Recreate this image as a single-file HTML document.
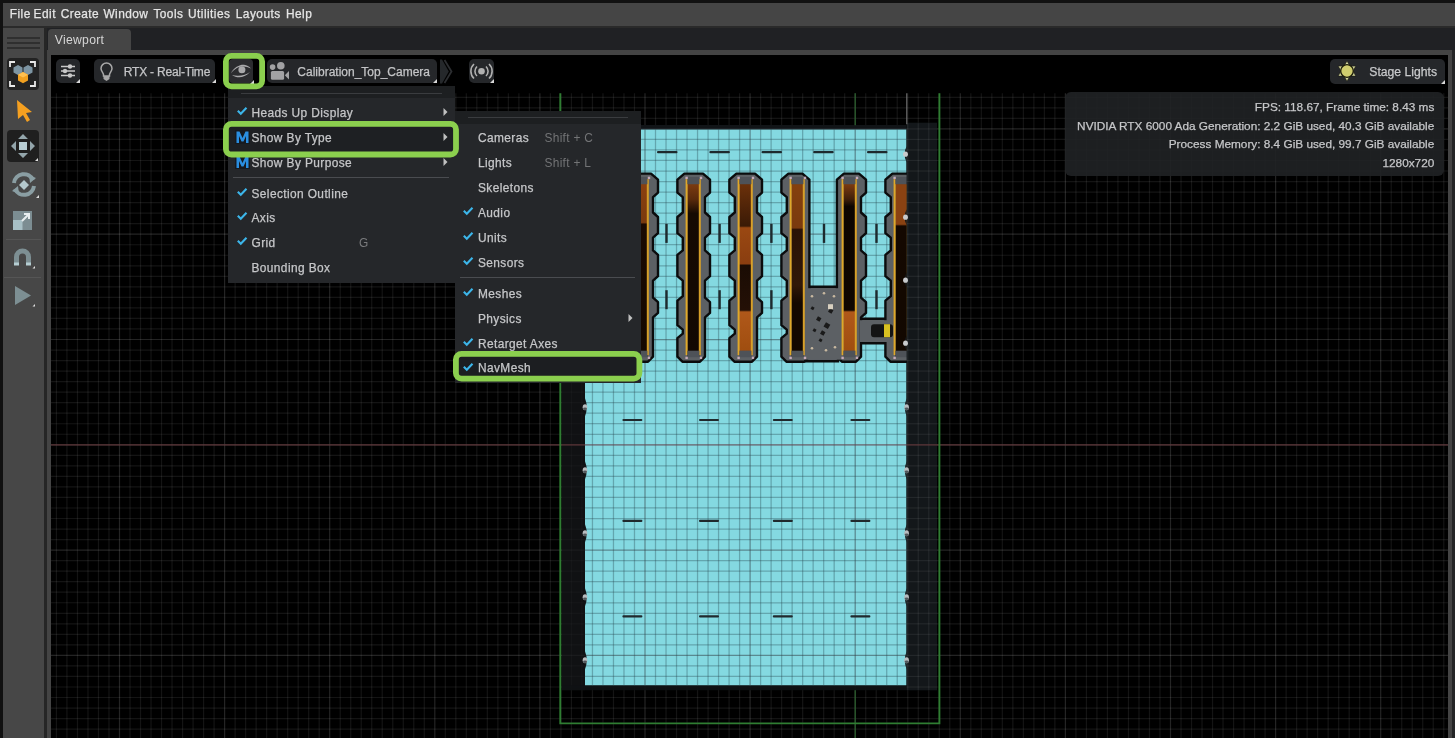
<!DOCTYPE html>
<html><head><meta charset="utf-8"><style>
html,body{margin:0;padding:0;}
body{width:1455px;height:738px;overflow:hidden;position:relative;font-family:"Liberation Sans", sans-serif;background:#111;-webkit-font-smoothing:antialiased;}
div{will-change:transform;}
</style></head><body>
<div style="position:absolute;left:0px;top:0px;width:1455px;height:738px;background:#111111;"></div><div style="position:absolute;left:3px;top:3px;width:1452px;height:23px;background:#454545;"></div><div style="position:absolute;left:3px;top:26px;width:1452px;height:1.5px;background:#2a2a2a;"></div><div style="position:absolute;left:3px;top:27.5px;width:41px;height:711px;background:#474747;"></div><div style="position:absolute;left:44px;top:27.5px;width:3px;height:711px;background:#262626;"></div><div style="position:absolute;left:47px;top:27.5px;width:1408px;height:23px;background:#202124;"></div><div style="position:absolute;left:48px;top:29px;width:83px;height:21.5px;background:#454545;border-radius:4px 4px 0 0"></div><div style="position:absolute;left:47px;top:50px;width:1405.5px;height:4.8px;background:#444444;"></div><div style="position:absolute;left:47px;top:50px;width:4px;height:688px;background:#444444;"></div><div style="position:absolute;left:1448.3px;top:50px;width:4px;height:688px;background:#444444;"></div><div style="position:absolute;left:1452.3px;top:50px;width:2.7px;height:688px;background:#242526;"></div><svg style="position:absolute;left:0;top:0;overflow:visible;will-change:transform" width="1" height="1"><text x="9.8" y="18.05" font-size="11.9" fill="#e6e6e6" stroke="#e6e6e6" stroke-width="0.25" font-weight="normal" letter-spacing="0.45" style="white-space:pre">File</text></svg><svg style="position:absolute;left:0;top:0;overflow:visible;will-change:transform" width="1" height="1"><text x="33.6" y="18.05" font-size="11.9" fill="#e6e6e6" stroke="#e6e6e6" stroke-width="0.25" font-weight="normal" letter-spacing="0.45" style="white-space:pre">Edit</text></svg><svg style="position:absolute;left:0;top:0;overflow:visible;will-change:transform" width="1" height="1"><text x="60.8" y="18.05" font-size="11.9" fill="#e6e6e6" stroke="#e6e6e6" stroke-width="0.25" font-weight="normal" letter-spacing="0.45" style="white-space:pre">Create</text></svg><svg style="position:absolute;left:0;top:0;overflow:visible;will-change:transform" width="1" height="1"><text x="103.4" y="18.05" font-size="11.9" fill="#e6e6e6" stroke="#e6e6e6" stroke-width="0.25" font-weight="normal" letter-spacing="0.45" style="white-space:pre">Window</text></svg><svg style="position:absolute;left:0;top:0;overflow:visible;will-change:transform" width="1" height="1"><text x="153.4" y="18.05" font-size="11.9" fill="#e6e6e6" stroke="#e6e6e6" stroke-width="0.25" font-weight="normal" letter-spacing="0.45" style="white-space:pre">Tools</text></svg><svg style="position:absolute;left:0;top:0;overflow:visible;will-change:transform" width="1" height="1"><text x="188.0" y="18.05" font-size="11.9" fill="#e6e6e6" stroke="#e6e6e6" stroke-width="0.25" font-weight="normal" letter-spacing="0.45" style="white-space:pre">Utilities</text></svg><svg style="position:absolute;left:0;top:0;overflow:visible;will-change:transform" width="1" height="1"><text x="235.8" y="18.05" font-size="11.9" fill="#e6e6e6" stroke="#e6e6e6" stroke-width="0.25" font-weight="normal" letter-spacing="0.45" style="white-space:pre">Layouts</text></svg><svg style="position:absolute;left:0;top:0;overflow:visible;will-change:transform" width="1" height="1"><text x="286.0" y="18.05" font-size="11.9" fill="#e6e6e6" stroke="#e6e6e6" stroke-width="0.25" font-weight="normal" letter-spacing="0.45" style="white-space:pre">Help</text></svg><svg style="position:absolute;left:0;top:0;overflow:visible;will-change:transform" width="1" height="1"><text x="54.7" y="44.4" font-size="12.2" fill="#d6d6d6" stroke="#d6d6d6" stroke-width="0" font-weight="normal" letter-spacing="0.3" style="white-space:pre">Viewport</text></svg><div style="position:absolute;left:6.5px;top:36.8px;width:32.5px;height:1.8px;background:#2f2f2f;"></div><div style="position:absolute;left:6.5px;top:41.7px;width:32.5px;height:1.8px;background:#2f2f2f;"></div><div style="position:absolute;left:6.5px;top:46.6px;width:32.5px;height:1.8px;background:#2f2f2f;"></div><div style="position:absolute;left:6.7px;top:57.8px;width:32px;height:31.7px;background:#232323;border-radius:4px"></div><svg style="position:absolute;left:7.2px;top:58px;overflow:visible;" width="31" height="32" viewBox="0 0 31 32">
<path d="M3 9 V4 H8 M23 4 H28 V9 M28 23 V28 H23 M8 28 H3 V23" fill="none" stroke="#e8e8e8" stroke-width="1.8"/>
<path d="M11 7 l4.5 2.5 v5 l-4.5 2.5 l-4.5 -2.5 v-5z" fill="#7d95a3"/>
<path d="M21 7 l4.5 2.5 v5 l-4.5 2.5 l-4.5 -2.5 v-5z" fill="#7d95a3"/>
<path d="M16 14 l5 2.8 v5.6 l-5 2.8 l-5 -2.8 v-5.6z" fill="#f0a020"/>
<path d="M16 14 l5 2.8 l-5 2.8 l-5 -2.8z" fill="#ffc050"/>
</svg><svg style="position:absolute;left:15px;top:99px;overflow:visible;" width="20" height="24" viewBox="0 0 20 24"><path d="M2 1 L17 13 L11 14 L15 21 L12 23 L8 16 L3 20 Z" fill="#f5a020"/></svg><div style="position:absolute;left:7px;top:130px;width:31.5px;height:32px;background:#1f1f1f;border-radius:4px"></div><svg style="position:absolute;left:7px;top:130px;overflow:visible;" width="32" height="32" viewBox="0 0 32 32">
<path d="M16 4 l5 5 h-10z M16 28 l5 -5 h-10z M4 16 l5 -5 v10z M28 16 l-5 -5 v10z" fill="#93a5ab"/>
<rect x="12" y="12" width="8" height="8" fill="#b8cdd3"/>
<path d="M31 28 v3 h-3z" fill="#e0e0e0"/>
</svg><svg style="position:absolute;left:8px;top:169px;overflow:visible;" width="32" height="30" viewBox="0 0 32 30">
<path d="M6 14 A10 10 0 0 1 25 11" fill="none" stroke="#8a9ea3" stroke-width="4"/>
<path d="M26 17 A10 10 0 0 1 7 20" fill="none" stroke="#8a9ea3" stroke-width="4"/>
<path d="M21 6 l7 3 l-6 5z M11 25 l-7 -3 l6 -5z" fill="#8a9ea3"/>
<path d="M16 11 l5 5 l-5 5 l-5 -5z" fill="#b5c8cc"/>
<path d="M31 26 v3 h-3z" fill="#e0e0e0"/>
</svg><svg style="position:absolute;left:12px;top:209.5px;overflow:visible;" width="22" height="22" viewBox="0 0 22 22">
<rect x="1" y="1" width="19" height="19" fill="#7c8d92"/>
<rect x="1" y="10" width="9.5" height="10" fill="#a8c0c6"/>
<path d="M10 11 L17 4 M12 4 h5 v5" fill="none" stroke="#e8eef0" stroke-width="2"/>
</svg><div style="position:absolute;left:6px;top:238.5px;width:35px;height:1px;background:#555555;"></div><svg style="position:absolute;left:12px;top:247px;overflow:visible;" width="24" height="22" viewBox="0 0 24 22">
<path d="M2 18 V10 A8.5 8.5 0 0 1 19 10 V18 H14 V10 A3.5 3.5 0 0 0 7 10 V18 Z" fill="#7d8f93"/>
<rect x="2" y="15.5" width="5" height="3" fill="#b5cdd2"/><rect x="14" y="15.5" width="5" height="3" fill="#b5cdd2"/>
<path d="M23 19 v2.5 h-2.5z" fill="#e0e0e0"/>
</svg><div style="position:absolute;left:3.5px;top:276.5px;width:37px;height:1px;background:#555555;"></div><svg style="position:absolute;left:13px;top:285px;overflow:visible;" width="24" height="24" viewBox="0 0 24 24">
<path d="M2 1 L18 10.5 L2 20 Z" fill="#7d8f93"/>
<path d="M22 19 v2.5 h-2.5z" fill="#e0e0e0"/>
</svg><div style="position:absolute;left:51px;top:54.8px;width:1397.3px;height:683.2px;background:#000;overflow:hidden"><svg style="position:absolute;left:0;top:0;filter:blur(0.45px)" width="1397.3" height="683.2"><line x1="5.44" y1="38.20" x2="5.44" y2="683.2" stroke="#fff" stroke-opacity="0.08" stroke-width="1.2"/><line x1="15.95" y1="38.20" x2="15.95" y2="683.2" stroke="#fff" stroke-opacity="0.08" stroke-width="1.2"/><line x1="26.46" y1="38.20" x2="26.46" y2="683.2" stroke="#fff" stroke-opacity="0.08" stroke-width="1.2"/><line x1="36.97" y1="38.20" x2="36.97" y2="683.2" stroke="#fff" stroke-opacity="0.08" stroke-width="1.2"/><line x1="47.48" y1="38.20" x2="47.48" y2="683.2" stroke="#fff" stroke-opacity="0.08" stroke-width="1.2"/><line x1="57.99" y1="38.20" x2="57.99" y2="683.2" stroke="#fff" stroke-opacity="0.08" stroke-width="1.2"/><line x1="68.50" y1="38.20" x2="68.50" y2="683.2" stroke="#fff" stroke-opacity="0.14" stroke-width="1.2"/><line x1="79.01" y1="38.20" x2="79.01" y2="683.2" stroke="#fff" stroke-opacity="0.08" stroke-width="1.2"/><line x1="89.52" y1="38.20" x2="89.52" y2="683.2" stroke="#fff" stroke-opacity="0.08" stroke-width="1.2"/><line x1="100.03" y1="38.20" x2="100.03" y2="683.2" stroke="#fff" stroke-opacity="0.08" stroke-width="1.2"/><line x1="110.54" y1="38.20" x2="110.54" y2="683.2" stroke="#fff" stroke-opacity="0.08" stroke-width="1.2"/><line x1="121.05" y1="38.20" x2="121.05" y2="683.2" stroke="#fff" stroke-opacity="0.08" stroke-width="1.2"/><line x1="131.56" y1="38.20" x2="131.56" y2="683.2" stroke="#fff" stroke-opacity="0.08" stroke-width="1.2"/><line x1="142.07" y1="38.20" x2="142.07" y2="683.2" stroke="#fff" stroke-opacity="0.08" stroke-width="1.2"/><line x1="152.58" y1="38.20" x2="152.58" y2="683.2" stroke="#fff" stroke-opacity="0.08" stroke-width="1.2"/><line x1="163.09" y1="38.20" x2="163.09" y2="683.2" stroke="#fff" stroke-opacity="0.08" stroke-width="1.2"/><line x1="173.60" y1="38.20" x2="173.60" y2="683.2" stroke="#fff" stroke-opacity="0.14" stroke-width="1.2"/><line x1="184.11" y1="38.20" x2="184.11" y2="683.2" stroke="#fff" stroke-opacity="0.08" stroke-width="1.2"/><line x1="194.62" y1="38.20" x2="194.62" y2="683.2" stroke="#fff" stroke-opacity="0.08" stroke-width="1.2"/><line x1="205.13" y1="38.20" x2="205.13" y2="683.2" stroke="#fff" stroke-opacity="0.08" stroke-width="1.2"/><line x1="215.64" y1="38.20" x2="215.64" y2="683.2" stroke="#fff" stroke-opacity="0.08" stroke-width="1.2"/><line x1="226.15" y1="38.20" x2="226.15" y2="683.2" stroke="#fff" stroke-opacity="0.08" stroke-width="1.2"/><line x1="236.66" y1="38.20" x2="236.66" y2="683.2" stroke="#fff" stroke-opacity="0.08" stroke-width="1.2"/><line x1="247.17" y1="38.20" x2="247.17" y2="683.2" stroke="#fff" stroke-opacity="0.08" stroke-width="1.2"/><line x1="257.68" y1="38.20" x2="257.68" y2="683.2" stroke="#fff" stroke-opacity="0.08" stroke-width="1.2"/><line x1="268.19" y1="38.20" x2="268.19" y2="683.2" stroke="#fff" stroke-opacity="0.08" stroke-width="1.2"/><line x1="278.70" y1="38.20" x2="278.70" y2="683.2" stroke="#fff" stroke-opacity="0.14" stroke-width="1.2"/><line x1="289.21" y1="38.20" x2="289.21" y2="683.2" stroke="#fff" stroke-opacity="0.08" stroke-width="1.2"/><line x1="299.72" y1="38.20" x2="299.72" y2="683.2" stroke="#fff" stroke-opacity="0.08" stroke-width="1.2"/><line x1="310.23" y1="38.20" x2="310.23" y2="683.2" stroke="#fff" stroke-opacity="0.08" stroke-width="1.2"/><line x1="320.74" y1="38.20" x2="320.74" y2="683.2" stroke="#fff" stroke-opacity="0.08" stroke-width="1.2"/><line x1="331.25" y1="38.20" x2="331.25" y2="683.2" stroke="#fff" stroke-opacity="0.08" stroke-width="1.2"/><line x1="341.76" y1="38.20" x2="341.76" y2="683.2" stroke="#fff" stroke-opacity="0.08" stroke-width="1.2"/><line x1="352.27" y1="38.20" x2="352.27" y2="683.2" stroke="#fff" stroke-opacity="0.08" stroke-width="1.2"/><line x1="362.78" y1="38.20" x2="362.78" y2="683.2" stroke="#fff" stroke-opacity="0.08" stroke-width="1.2"/><line x1="373.29" y1="38.20" x2="373.29" y2="683.2" stroke="#fff" stroke-opacity="0.08" stroke-width="1.2"/><line x1="383.80" y1="38.20" x2="383.80" y2="683.2" stroke="#fff" stroke-opacity="0.14" stroke-width="1.2"/><line x1="394.31" y1="38.20" x2="394.31" y2="683.2" stroke="#fff" stroke-opacity="0.08" stroke-width="1.2"/><line x1="404.82" y1="38.20" x2="404.82" y2="683.2" stroke="#fff" stroke-opacity="0.08" stroke-width="1.2"/><line x1="415.33" y1="38.20" x2="415.33" y2="683.2" stroke="#fff" stroke-opacity="0.08" stroke-width="1.2"/><line x1="425.84" y1="38.20" x2="425.84" y2="683.2" stroke="#fff" stroke-opacity="0.08" stroke-width="1.2"/><line x1="436.35" y1="38.20" x2="436.35" y2="683.2" stroke="#fff" stroke-opacity="0.08" stroke-width="1.2"/><line x1="446.86" y1="38.20" x2="446.86" y2="683.2" stroke="#fff" stroke-opacity="0.08" stroke-width="1.2"/><line x1="457.37" y1="38.20" x2="457.37" y2="683.2" stroke="#fff" stroke-opacity="0.08" stroke-width="1.2"/><line x1="467.88" y1="38.20" x2="467.88" y2="683.2" stroke="#fff" stroke-opacity="0.08" stroke-width="1.2"/><line x1="478.39" y1="38.20" x2="478.39" y2="683.2" stroke="#fff" stroke-opacity="0.08" stroke-width="1.2"/><line x1="488.90" y1="38.20" x2="488.90" y2="683.2" stroke="#fff" stroke-opacity="0.14" stroke-width="1.2"/><line x1="499.41" y1="38.20" x2="499.41" y2="683.2" stroke="#fff" stroke-opacity="0.08" stroke-width="1.2"/><line x1="509.92" y1="38.20" x2="509.92" y2="683.2" stroke="#fff" stroke-opacity="0.08" stroke-width="1.2"/><line x1="520.43" y1="38.20" x2="520.43" y2="683.2" stroke="#fff" stroke-opacity="0.08" stroke-width="1.2"/><line x1="530.94" y1="38.20" x2="530.94" y2="683.2" stroke="#fff" stroke-opacity="0.08" stroke-width="1.2"/><line x1="541.45" y1="38.20" x2="541.45" y2="683.2" stroke="#fff" stroke-opacity="0.08" stroke-width="1.2"/><line x1="551.96" y1="38.20" x2="551.96" y2="683.2" stroke="#fff" stroke-opacity="0.08" stroke-width="1.2"/><line x1="562.47" y1="38.20" x2="562.47" y2="683.2" stroke="#fff" stroke-opacity="0.08" stroke-width="1.2"/><line x1="572.98" y1="38.20" x2="572.98" y2="683.2" stroke="#fff" stroke-opacity="0.08" stroke-width="1.2"/><line x1="583.49" y1="38.20" x2="583.49" y2="683.2" stroke="#fff" stroke-opacity="0.08" stroke-width="1.2"/><line x1="594.00" y1="38.20" x2="594.00" y2="683.2" stroke="#fff" stroke-opacity="0.14" stroke-width="1.2"/><line x1="604.51" y1="38.20" x2="604.51" y2="683.2" stroke="#fff" stroke-opacity="0.08" stroke-width="1.2"/><line x1="615.02" y1="38.20" x2="615.02" y2="683.2" stroke="#fff" stroke-opacity="0.08" stroke-width="1.2"/><line x1="625.53" y1="38.20" x2="625.53" y2="683.2" stroke="#fff" stroke-opacity="0.08" stroke-width="1.2"/><line x1="636.04" y1="38.20" x2="636.04" y2="683.2" stroke="#fff" stroke-opacity="0.08" stroke-width="1.2"/><line x1="646.55" y1="38.20" x2="646.55" y2="683.2" stroke="#fff" stroke-opacity="0.08" stroke-width="1.2"/><line x1="657.06" y1="38.20" x2="657.06" y2="683.2" stroke="#fff" stroke-opacity="0.08" stroke-width="1.2"/><line x1="667.57" y1="38.20" x2="667.57" y2="683.2" stroke="#fff" stroke-opacity="0.08" stroke-width="1.2"/><line x1="678.08" y1="38.20" x2="678.08" y2="683.2" stroke="#fff" stroke-opacity="0.08" stroke-width="1.2"/><line x1="688.59" y1="38.20" x2="688.59" y2="683.2" stroke="#fff" stroke-opacity="0.08" stroke-width="1.2"/><line x1="699.10" y1="38.20" x2="699.10" y2="683.2" stroke="#fff" stroke-opacity="0.14" stroke-width="1.2"/><line x1="709.61" y1="38.20" x2="709.61" y2="683.2" stroke="#fff" stroke-opacity="0.08" stroke-width="1.2"/><line x1="720.12" y1="38.20" x2="720.12" y2="683.2" stroke="#fff" stroke-opacity="0.08" stroke-width="1.2"/><line x1="730.63" y1="38.20" x2="730.63" y2="683.2" stroke="#fff" stroke-opacity="0.08" stroke-width="1.2"/><line x1="741.14" y1="38.20" x2="741.14" y2="683.2" stroke="#fff" stroke-opacity="0.08" stroke-width="1.2"/><line x1="751.65" y1="38.20" x2="751.65" y2="683.2" stroke="#fff" stroke-opacity="0.08" stroke-width="1.2"/><line x1="762.16" y1="38.20" x2="762.16" y2="683.2" stroke="#fff" stroke-opacity="0.08" stroke-width="1.2"/><line x1="772.67" y1="38.20" x2="772.67" y2="683.2" stroke="#fff" stroke-opacity="0.08" stroke-width="1.2"/><line x1="783.18" y1="38.20" x2="783.18" y2="683.2" stroke="#fff" stroke-opacity="0.08" stroke-width="1.2"/><line x1="793.69" y1="38.20" x2="793.69" y2="683.2" stroke="#fff" stroke-opacity="0.08" stroke-width="1.2"/><line x1="804.20" y1="38.20" x2="804.20" y2="683.2" stroke="#fff" stroke-opacity="0.14" stroke-width="1.2"/><line x1="814.71" y1="38.20" x2="814.71" y2="683.2" stroke="#fff" stroke-opacity="0.08" stroke-width="1.2"/><line x1="825.22" y1="38.20" x2="825.22" y2="683.2" stroke="#fff" stroke-opacity="0.08" stroke-width="1.2"/><line x1="835.73" y1="38.20" x2="835.73" y2="683.2" stroke="#fff" stroke-opacity="0.08" stroke-width="1.2"/><line x1="846.24" y1="38.20" x2="846.24" y2="683.2" stroke="#fff" stroke-opacity="0.08" stroke-width="1.2"/><line x1="856.75" y1="38.20" x2="856.75" y2="683.2" stroke="#fff" stroke-opacity="0.08" stroke-width="1.2"/><line x1="867.26" y1="38.20" x2="867.26" y2="683.2" stroke="#fff" stroke-opacity="0.08" stroke-width="1.2"/><line x1="877.77" y1="38.20" x2="877.77" y2="683.2" stroke="#fff" stroke-opacity="0.08" stroke-width="1.2"/><line x1="888.28" y1="38.20" x2="888.28" y2="683.2" stroke="#fff" stroke-opacity="0.08" stroke-width="1.2"/><line x1="898.79" y1="38.20" x2="898.79" y2="683.2" stroke="#fff" stroke-opacity="0.08" stroke-width="1.2"/><line x1="909.30" y1="38.20" x2="909.30" y2="683.2" stroke="#fff" stroke-opacity="0.14" stroke-width="1.2"/><line x1="919.81" y1="38.20" x2="919.81" y2="683.2" stroke="#fff" stroke-opacity="0.08" stroke-width="1.2"/><line x1="930.32" y1="38.20" x2="930.32" y2="683.2" stroke="#fff" stroke-opacity="0.08" stroke-width="1.2"/><line x1="940.83" y1="38.20" x2="940.83" y2="683.2" stroke="#fff" stroke-opacity="0.08" stroke-width="1.2"/><line x1="951.34" y1="38.20" x2="951.34" y2="683.2" stroke="#fff" stroke-opacity="0.08" stroke-width="1.2"/><line x1="961.85" y1="38.20" x2="961.85" y2="683.2" stroke="#fff" stroke-opacity="0.08" stroke-width="1.2"/><line x1="972.36" y1="38.20" x2="972.36" y2="683.2" stroke="#fff" stroke-opacity="0.08" stroke-width="1.2"/><line x1="982.87" y1="38.20" x2="982.87" y2="683.2" stroke="#fff" stroke-opacity="0.08" stroke-width="1.2"/><line x1="993.38" y1="38.20" x2="993.38" y2="683.2" stroke="#fff" stroke-opacity="0.08" stroke-width="1.2"/><line x1="1003.89" y1="38.20" x2="1003.89" y2="683.2" stroke="#fff" stroke-opacity="0.08" stroke-width="1.2"/><line x1="1014.40" y1="38.20" x2="1014.40" y2="683.2" stroke="#fff" stroke-opacity="0.14" stroke-width="1.2"/><line x1="1024.91" y1="38.20" x2="1024.91" y2="683.2" stroke="#fff" stroke-opacity="0.08" stroke-width="1.2"/><line x1="1035.42" y1="38.20" x2="1035.42" y2="683.2" stroke="#fff" stroke-opacity="0.08" stroke-width="1.2"/><line x1="1045.93" y1="38.20" x2="1045.93" y2="683.2" stroke="#fff" stroke-opacity="0.08" stroke-width="1.2"/><line x1="1056.44" y1="38.20" x2="1056.44" y2="683.2" stroke="#fff" stroke-opacity="0.08" stroke-width="1.2"/><line x1="1066.95" y1="38.20" x2="1066.95" y2="683.2" stroke="#fff" stroke-opacity="0.08" stroke-width="1.2"/><line x1="1077.46" y1="38.20" x2="1077.46" y2="683.2" stroke="#fff" stroke-opacity="0.08" stroke-width="1.2"/><line x1="1087.97" y1="38.20" x2="1087.97" y2="683.2" stroke="#fff" stroke-opacity="0.08" stroke-width="1.2"/><line x1="1098.48" y1="38.20" x2="1098.48" y2="683.2" stroke="#fff" stroke-opacity="0.08" stroke-width="1.2"/><line x1="1108.99" y1="38.20" x2="1108.99" y2="683.2" stroke="#fff" stroke-opacity="0.08" stroke-width="1.2"/><line x1="1119.50" y1="38.20" x2="1119.50" y2="683.2" stroke="#fff" stroke-opacity="0.14" stroke-width="1.2"/><line x1="1130.01" y1="38.20" x2="1130.01" y2="683.2" stroke="#fff" stroke-opacity="0.08" stroke-width="1.2"/><line x1="1140.52" y1="38.20" x2="1140.52" y2="683.2" stroke="#fff" stroke-opacity="0.08" stroke-width="1.2"/><line x1="1151.03" y1="38.20" x2="1151.03" y2="683.2" stroke="#fff" stroke-opacity="0.08" stroke-width="1.2"/><line x1="1161.54" y1="38.20" x2="1161.54" y2="683.2" stroke="#fff" stroke-opacity="0.08" stroke-width="1.2"/><line x1="1172.05" y1="38.20" x2="1172.05" y2="683.2" stroke="#fff" stroke-opacity="0.08" stroke-width="1.2"/><line x1="1182.56" y1="38.20" x2="1182.56" y2="683.2" stroke="#fff" stroke-opacity="0.08" stroke-width="1.2"/><line x1="1193.07" y1="38.20" x2="1193.07" y2="683.2" stroke="#fff" stroke-opacity="0.08" stroke-width="1.2"/><line x1="1203.58" y1="38.20" x2="1203.58" y2="683.2" stroke="#fff" stroke-opacity="0.08" stroke-width="1.2"/><line x1="1214.09" y1="38.20" x2="1214.09" y2="683.2" stroke="#fff" stroke-opacity="0.08" stroke-width="1.2"/><line x1="1224.60" y1="38.20" x2="1224.60" y2="683.2" stroke="#fff" stroke-opacity="0.14" stroke-width="1.2"/><line x1="1235.11" y1="38.20" x2="1235.11" y2="683.2" stroke="#fff" stroke-opacity="0.08" stroke-width="1.2"/><line x1="1245.62" y1="38.20" x2="1245.62" y2="683.2" stroke="#fff" stroke-opacity="0.08" stroke-width="1.2"/><line x1="1256.13" y1="38.20" x2="1256.13" y2="683.2" stroke="#fff" stroke-opacity="0.08" stroke-width="1.2"/><line x1="1266.64" y1="38.20" x2="1266.64" y2="683.2" stroke="#fff" stroke-opacity="0.08" stroke-width="1.2"/><line x1="1277.15" y1="38.20" x2="1277.15" y2="683.2" stroke="#fff" stroke-opacity="0.08" stroke-width="1.2"/><line x1="1287.66" y1="38.20" x2="1287.66" y2="683.2" stroke="#fff" stroke-opacity="0.08" stroke-width="1.2"/><line x1="1298.17" y1="38.20" x2="1298.17" y2="683.2" stroke="#fff" stroke-opacity="0.08" stroke-width="1.2"/><line x1="1308.68" y1="38.20" x2="1308.68" y2="683.2" stroke="#fff" stroke-opacity="0.08" stroke-width="1.2"/><line x1="1319.19" y1="38.20" x2="1319.19" y2="683.2" stroke="#fff" stroke-opacity="0.08" stroke-width="1.2"/><line x1="1329.70" y1="38.20" x2="1329.70" y2="683.2" stroke="#fff" stroke-opacity="0.14" stroke-width="1.2"/><line x1="1340.21" y1="38.20" x2="1340.21" y2="683.2" stroke="#fff" stroke-opacity="0.08" stroke-width="1.2"/><line x1="1350.72" y1="38.20" x2="1350.72" y2="683.2" stroke="#fff" stroke-opacity="0.08" stroke-width="1.2"/><line x1="1361.23" y1="38.20" x2="1361.23" y2="683.2" stroke="#fff" stroke-opacity="0.08" stroke-width="1.2"/><line x1="1371.74" y1="38.20" x2="1371.74" y2="683.2" stroke="#fff" stroke-opacity="0.08" stroke-width="1.2"/><line x1="1382.25" y1="38.20" x2="1382.25" y2="683.2" stroke="#fff" stroke-opacity="0.08" stroke-width="1.2"/><line x1="1392.76" y1="38.20" x2="1392.76" y2="683.2" stroke="#fff" stroke-opacity="0.08" stroke-width="1.2"/><line x1="0" y1="42.31" x2="1397.3" y2="42.31" stroke="#fff" stroke-opacity="0.08" stroke-width="1.2"/><line x1="0" y1="52.84" x2="1397.3" y2="52.84" stroke="#fff" stroke-opacity="0.08" stroke-width="1.2"/><line x1="0" y1="63.37" x2="1397.3" y2="63.37" stroke="#fff" stroke-opacity="0.08" stroke-width="1.2"/><line x1="0" y1="73.90" x2="1397.3" y2="73.90" stroke="#fff" stroke-opacity="0.14" stroke-width="1.2"/><line x1="0" y1="84.43" x2="1397.3" y2="84.43" stroke="#fff" stroke-opacity="0.08" stroke-width="1.2"/><line x1="0" y1="94.96" x2="1397.3" y2="94.96" stroke="#fff" stroke-opacity="0.08" stroke-width="1.2"/><line x1="0" y1="105.49" x2="1397.3" y2="105.49" stroke="#fff" stroke-opacity="0.08" stroke-width="1.2"/><line x1="0" y1="116.02" x2="1397.3" y2="116.02" stroke="#fff" stroke-opacity="0.08" stroke-width="1.2"/><line x1="0" y1="126.55" x2="1397.3" y2="126.55" stroke="#fff" stroke-opacity="0.08" stroke-width="1.2"/><line x1="0" y1="137.08" x2="1397.3" y2="137.08" stroke="#fff" stroke-opacity="0.08" stroke-width="1.2"/><line x1="0" y1="147.61" x2="1397.3" y2="147.61" stroke="#fff" stroke-opacity="0.08" stroke-width="1.2"/><line x1="0" y1="158.14" x2="1397.3" y2="158.14" stroke="#fff" stroke-opacity="0.08" stroke-width="1.2"/><line x1="0" y1="168.67" x2="1397.3" y2="168.67" stroke="#fff" stroke-opacity="0.08" stroke-width="1.2"/><line x1="0" y1="179.20" x2="1397.3" y2="179.20" stroke="#fff" stroke-opacity="0.14" stroke-width="1.2"/><line x1="0" y1="189.73" x2="1397.3" y2="189.73" stroke="#fff" stroke-opacity="0.08" stroke-width="1.2"/><line x1="0" y1="200.26" x2="1397.3" y2="200.26" stroke="#fff" stroke-opacity="0.08" stroke-width="1.2"/><line x1="0" y1="210.79" x2="1397.3" y2="210.79" stroke="#fff" stroke-opacity="0.08" stroke-width="1.2"/><line x1="0" y1="221.32" x2="1397.3" y2="221.32" stroke="#fff" stroke-opacity="0.08" stroke-width="1.2"/><line x1="0" y1="231.85" x2="1397.3" y2="231.85" stroke="#fff" stroke-opacity="0.08" stroke-width="1.2"/><line x1="0" y1="242.38" x2="1397.3" y2="242.38" stroke="#fff" stroke-opacity="0.08" stroke-width="1.2"/><line x1="0" y1="252.91" x2="1397.3" y2="252.91" stroke="#fff" stroke-opacity="0.08" stroke-width="1.2"/><line x1="0" y1="263.44" x2="1397.3" y2="263.44" stroke="#fff" stroke-opacity="0.08" stroke-width="1.2"/><line x1="0" y1="273.97" x2="1397.3" y2="273.97" stroke="#fff" stroke-opacity="0.08" stroke-width="1.2"/><line x1="0" y1="284.50" x2="1397.3" y2="284.50" stroke="#fff" stroke-opacity="0.14" stroke-width="1.2"/><line x1="0" y1="295.03" x2="1397.3" y2="295.03" stroke="#fff" stroke-opacity="0.08" stroke-width="1.2"/><line x1="0" y1="305.56" x2="1397.3" y2="305.56" stroke="#fff" stroke-opacity="0.08" stroke-width="1.2"/><line x1="0" y1="316.09" x2="1397.3" y2="316.09" stroke="#fff" stroke-opacity="0.08" stroke-width="1.2"/><line x1="0" y1="326.62" x2="1397.3" y2="326.62" stroke="#fff" stroke-opacity="0.08" stroke-width="1.2"/><line x1="0" y1="337.15" x2="1397.3" y2="337.15" stroke="#fff" stroke-opacity="0.08" stroke-width="1.2"/><line x1="0" y1="347.68" x2="1397.3" y2="347.68" stroke="#fff" stroke-opacity="0.08" stroke-width="1.2"/><line x1="0" y1="358.21" x2="1397.3" y2="358.21" stroke="#fff" stroke-opacity="0.08" stroke-width="1.2"/><line x1="0" y1="368.74" x2="1397.3" y2="368.74" stroke="#fff" stroke-opacity="0.08" stroke-width="1.2"/><line x1="0" y1="379.27" x2="1397.3" y2="379.27" stroke="#fff" stroke-opacity="0.08" stroke-width="1.2"/><line x1="0" y1="389.80" x2="1397.3" y2="389.80" stroke="#fff" stroke-opacity="0.14" stroke-width="1.2"/><line x1="0" y1="400.33" x2="1397.3" y2="400.33" stroke="#fff" stroke-opacity="0.08" stroke-width="1.2"/><line x1="0" y1="410.86" x2="1397.3" y2="410.86" stroke="#fff" stroke-opacity="0.08" stroke-width="1.2"/><line x1="0" y1="421.39" x2="1397.3" y2="421.39" stroke="#fff" stroke-opacity="0.08" stroke-width="1.2"/><line x1="0" y1="431.92" x2="1397.3" y2="431.92" stroke="#fff" stroke-opacity="0.08" stroke-width="1.2"/><line x1="0" y1="442.45" x2="1397.3" y2="442.45" stroke="#fff" stroke-opacity="0.08" stroke-width="1.2"/><line x1="0" y1="452.98" x2="1397.3" y2="452.98" stroke="#fff" stroke-opacity="0.08" stroke-width="1.2"/><line x1="0" y1="463.51" x2="1397.3" y2="463.51" stroke="#fff" stroke-opacity="0.08" stroke-width="1.2"/><line x1="0" y1="474.04" x2="1397.3" y2="474.04" stroke="#fff" stroke-opacity="0.08" stroke-width="1.2"/><line x1="0" y1="484.57" x2="1397.3" y2="484.57" stroke="#fff" stroke-opacity="0.08" stroke-width="1.2"/><line x1="0" y1="495.10" x2="1397.3" y2="495.10" stroke="#fff" stroke-opacity="0.14" stroke-width="1.2"/><line x1="0" y1="505.63" x2="1397.3" y2="505.63" stroke="#fff" stroke-opacity="0.08" stroke-width="1.2"/><line x1="0" y1="516.16" x2="1397.3" y2="516.16" stroke="#fff" stroke-opacity="0.08" stroke-width="1.2"/><line x1="0" y1="526.69" x2="1397.3" y2="526.69" stroke="#fff" stroke-opacity="0.08" stroke-width="1.2"/><line x1="0" y1="537.22" x2="1397.3" y2="537.22" stroke="#fff" stroke-opacity="0.08" stroke-width="1.2"/><line x1="0" y1="547.75" x2="1397.3" y2="547.75" stroke="#fff" stroke-opacity="0.08" stroke-width="1.2"/><line x1="0" y1="558.28" x2="1397.3" y2="558.28" stroke="#fff" stroke-opacity="0.08" stroke-width="1.2"/><line x1="0" y1="568.81" x2="1397.3" y2="568.81" stroke="#fff" stroke-opacity="0.08" stroke-width="1.2"/><line x1="0" y1="579.34" x2="1397.3" y2="579.34" stroke="#fff" stroke-opacity="0.08" stroke-width="1.2"/><line x1="0" y1="589.87" x2="1397.3" y2="589.87" stroke="#fff" stroke-opacity="0.08" stroke-width="1.2"/><line x1="0" y1="600.40" x2="1397.3" y2="600.40" stroke="#fff" stroke-opacity="0.14" stroke-width="1.2"/><line x1="0" y1="610.93" x2="1397.3" y2="610.93" stroke="#fff" stroke-opacity="0.08" stroke-width="1.2"/><line x1="0" y1="621.46" x2="1397.3" y2="621.46" stroke="#fff" stroke-opacity="0.08" stroke-width="1.2"/><line x1="0" y1="631.99" x2="1397.3" y2="631.99" stroke="#fff" stroke-opacity="0.08" stroke-width="1.2"/><line x1="0" y1="642.52" x2="1397.3" y2="642.52" stroke="#fff" stroke-opacity="0.08" stroke-width="1.2"/><line x1="0" y1="653.05" x2="1397.3" y2="653.05" stroke="#fff" stroke-opacity="0.08" stroke-width="1.2"/><line x1="0" y1="663.58" x2="1397.3" y2="663.58" stroke="#fff" stroke-opacity="0.08" stroke-width="1.2"/><line x1="0" y1="674.11" x2="1397.3" y2="674.11" stroke="#fff" stroke-opacity="0.08" stroke-width="1.2"/></svg><svg style="position:absolute;left:0;top:0" width="1397.3" height="683.2"><rect x="511" y="73.2" width="23" height="562" fill="#16181b" opacity="0.72"/><rect x="511" y="630.2" width="375" height="5" fill="#101214" opacity="0.9"/><path d="M534.00,74.20 L855.50,74.20 L855.50,630.20 L534.00,630.20 Z" fill="#84d9e1"/><rect x="534" y="70.0" width="321.6" height="4.2" fill="#111417"/><line x1="541.45" y1="74.2" x2="541.45" y2="630.2" stroke="#22434b" stroke-opacity="0.34" stroke-width="1.25"/><line x1="551.96" y1="74.2" x2="551.96" y2="630.2" stroke="#22434b" stroke-opacity="0.34" stroke-width="1.25"/><line x1="562.47" y1="74.2" x2="562.47" y2="630.2" stroke="#22434b" stroke-opacity="0.34" stroke-width="1.25"/><line x1="572.98" y1="74.2" x2="572.98" y2="630.2" stroke="#22434b" stroke-opacity="0.34" stroke-width="1.25"/><line x1="583.49" y1="74.2" x2="583.49" y2="630.2" stroke="#22434b" stroke-opacity="0.34" stroke-width="1.25"/><line x1="594.00" y1="74.2" x2="594.00" y2="630.2" stroke="#303a40" stroke-opacity="0.5" stroke-width="1.25"/><line x1="604.51" y1="74.2" x2="604.51" y2="630.2" stroke="#22434b" stroke-opacity="0.34" stroke-width="1.25"/><line x1="615.02" y1="74.2" x2="615.02" y2="630.2" stroke="#22434b" stroke-opacity="0.34" stroke-width="1.25"/><line x1="625.53" y1="74.2" x2="625.53" y2="630.2" stroke="#22434b" stroke-opacity="0.34" stroke-width="1.25"/><line x1="636.04" y1="74.2" x2="636.04" y2="630.2" stroke="#22434b" stroke-opacity="0.34" stroke-width="1.25"/><line x1="646.55" y1="74.2" x2="646.55" y2="630.2" stroke="#22434b" stroke-opacity="0.34" stroke-width="1.25"/><line x1="657.06" y1="74.2" x2="657.06" y2="630.2" stroke="#22434b" stroke-opacity="0.34" stroke-width="1.25"/><line x1="667.57" y1="74.2" x2="667.57" y2="630.2" stroke="#22434b" stroke-opacity="0.34" stroke-width="1.25"/><line x1="678.08" y1="74.2" x2="678.08" y2="630.2" stroke="#22434b" stroke-opacity="0.34" stroke-width="1.25"/><line x1="688.59" y1="74.2" x2="688.59" y2="630.2" stroke="#22434b" stroke-opacity="0.34" stroke-width="1.25"/><line x1="699.10" y1="74.2" x2="699.10" y2="630.2" stroke="#303a40" stroke-opacity="0.5" stroke-width="1.25"/><line x1="709.61" y1="74.2" x2="709.61" y2="630.2" stroke="#22434b" stroke-opacity="0.34" stroke-width="1.25"/><line x1="720.12" y1="74.2" x2="720.12" y2="630.2" stroke="#22434b" stroke-opacity="0.34" stroke-width="1.25"/><line x1="730.63" y1="74.2" x2="730.63" y2="630.2" stroke="#22434b" stroke-opacity="0.34" stroke-width="1.25"/><line x1="741.14" y1="74.2" x2="741.14" y2="630.2" stroke="#22434b" stroke-opacity="0.34" stroke-width="1.25"/><line x1="751.65" y1="74.2" x2="751.65" y2="630.2" stroke="#22434b" stroke-opacity="0.34" stroke-width="1.25"/><line x1="762.16" y1="74.2" x2="762.16" y2="630.2" stroke="#22434b" stroke-opacity="0.34" stroke-width="1.25"/><line x1="772.67" y1="74.2" x2="772.67" y2="630.2" stroke="#22434b" stroke-opacity="0.34" stroke-width="1.25"/><line x1="783.18" y1="74.2" x2="783.18" y2="630.2" stroke="#22434b" stroke-opacity="0.34" stroke-width="1.25"/><line x1="793.69" y1="74.2" x2="793.69" y2="630.2" stroke="#22434b" stroke-opacity="0.34" stroke-width="1.25"/><line x1="804.20" y1="74.2" x2="804.20" y2="630.2" stroke="#303a40" stroke-opacity="0.5" stroke-width="1.25"/><line x1="814.71" y1="74.2" x2="814.71" y2="630.2" stroke="#22434b" stroke-opacity="0.34" stroke-width="1.25"/><line x1="825.22" y1="74.2" x2="825.22" y2="630.2" stroke="#22434b" stroke-opacity="0.34" stroke-width="1.25"/><line x1="835.73" y1="74.2" x2="835.73" y2="630.2" stroke="#22434b" stroke-opacity="0.34" stroke-width="1.25"/><line x1="846.24" y1="74.2" x2="846.24" y2="630.2" stroke="#22434b" stroke-opacity="0.34" stroke-width="1.25"/><line x1="534" y1="73.90" x2="855.5" y2="73.90" stroke="#303a40" stroke-opacity="0.5" stroke-width="1.25"/><line x1="534" y1="84.43" x2="855.5" y2="84.43" stroke="#22434b" stroke-opacity="0.34" stroke-width="1.25"/><line x1="534" y1="94.96" x2="855.5" y2="94.96" stroke="#22434b" stroke-opacity="0.34" stroke-width="1.25"/><line x1="534" y1="105.49" x2="855.5" y2="105.49" stroke="#22434b" stroke-opacity="0.34" stroke-width="1.25"/><line x1="534" y1="116.02" x2="855.5" y2="116.02" stroke="#22434b" stroke-opacity="0.34" stroke-width="1.25"/><line x1="534" y1="126.55" x2="855.5" y2="126.55" stroke="#22434b" stroke-opacity="0.34" stroke-width="1.25"/><line x1="534" y1="137.08" x2="855.5" y2="137.08" stroke="#22434b" stroke-opacity="0.34" stroke-width="1.25"/><line x1="534" y1="147.61" x2="855.5" y2="147.61" stroke="#22434b" stroke-opacity="0.34" stroke-width="1.25"/><line x1="534" y1="158.14" x2="855.5" y2="158.14" stroke="#22434b" stroke-opacity="0.34" stroke-width="1.25"/><line x1="534" y1="168.67" x2="855.5" y2="168.67" stroke="#22434b" stroke-opacity="0.34" stroke-width="1.25"/><line x1="534" y1="179.20" x2="855.5" y2="179.20" stroke="#303a40" stroke-opacity="0.5" stroke-width="1.25"/><line x1="534" y1="189.73" x2="855.5" y2="189.73" stroke="#22434b" stroke-opacity="0.34" stroke-width="1.25"/><line x1="534" y1="200.26" x2="855.5" y2="200.26" stroke="#22434b" stroke-opacity="0.34" stroke-width="1.25"/><line x1="534" y1="210.79" x2="855.5" y2="210.79" stroke="#22434b" stroke-opacity="0.34" stroke-width="1.25"/><line x1="534" y1="221.32" x2="855.5" y2="221.32" stroke="#22434b" stroke-opacity="0.34" stroke-width="1.25"/><line x1="534" y1="231.85" x2="855.5" y2="231.85" stroke="#22434b" stroke-opacity="0.34" stroke-width="1.25"/><line x1="534" y1="242.38" x2="855.5" y2="242.38" stroke="#22434b" stroke-opacity="0.34" stroke-width="1.25"/><line x1="534" y1="252.91" x2="855.5" y2="252.91" stroke="#22434b" stroke-opacity="0.34" stroke-width="1.25"/><line x1="534" y1="263.44" x2="855.5" y2="263.44" stroke="#22434b" stroke-opacity="0.34" stroke-width="1.25"/><line x1="534" y1="273.97" x2="855.5" y2="273.97" stroke="#22434b" stroke-opacity="0.34" stroke-width="1.25"/><line x1="534" y1="284.50" x2="855.5" y2="284.50" stroke="#303a40" stroke-opacity="0.5" stroke-width="1.25"/><line x1="534" y1="295.03" x2="855.5" y2="295.03" stroke="#22434b" stroke-opacity="0.34" stroke-width="1.25"/><line x1="534" y1="305.56" x2="855.5" y2="305.56" stroke="#22434b" stroke-opacity="0.34" stroke-width="1.25"/><line x1="534" y1="316.09" x2="855.5" y2="316.09" stroke="#22434b" stroke-opacity="0.34" stroke-width="1.25"/><line x1="534" y1="326.62" x2="855.5" y2="326.62" stroke="#22434b" stroke-opacity="0.34" stroke-width="1.25"/><line x1="534" y1="337.15" x2="855.5" y2="337.15" stroke="#22434b" stroke-opacity="0.34" stroke-width="1.25"/><line x1="534" y1="347.68" x2="855.5" y2="347.68" stroke="#22434b" stroke-opacity="0.34" stroke-width="1.25"/><line x1="534" y1="358.21" x2="855.5" y2="358.21" stroke="#22434b" stroke-opacity="0.34" stroke-width="1.25"/><line x1="534" y1="368.74" x2="855.5" y2="368.74" stroke="#22434b" stroke-opacity="0.34" stroke-width="1.25"/><line x1="534" y1="379.27" x2="855.5" y2="379.27" stroke="#22434b" stroke-opacity="0.34" stroke-width="1.25"/><line x1="534" y1="389.80" x2="855.5" y2="389.80" stroke="#303a40" stroke-opacity="0.5" stroke-width="1.25"/><line x1="534" y1="400.33" x2="855.5" y2="400.33" stroke="#22434b" stroke-opacity="0.34" stroke-width="1.25"/><line x1="534" y1="410.86" x2="855.5" y2="410.86" stroke="#22434b" stroke-opacity="0.34" stroke-width="1.25"/><line x1="534" y1="421.39" x2="855.5" y2="421.39" stroke="#22434b" stroke-opacity="0.34" stroke-width="1.25"/><line x1="534" y1="431.92" x2="855.5" y2="431.92" stroke="#22434b" stroke-opacity="0.34" stroke-width="1.25"/><line x1="534" y1="442.45" x2="855.5" y2="442.45" stroke="#22434b" stroke-opacity="0.34" stroke-width="1.25"/><line x1="534" y1="452.98" x2="855.5" y2="452.98" stroke="#22434b" stroke-opacity="0.34" stroke-width="1.25"/><line x1="534" y1="463.51" x2="855.5" y2="463.51" stroke="#22434b" stroke-opacity="0.34" stroke-width="1.25"/><line x1="534" y1="474.04" x2="855.5" y2="474.04" stroke="#22434b" stroke-opacity="0.34" stroke-width="1.25"/><line x1="534" y1="484.57" x2="855.5" y2="484.57" stroke="#22434b" stroke-opacity="0.34" stroke-width="1.25"/><line x1="534" y1="495.10" x2="855.5" y2="495.10" stroke="#303a40" stroke-opacity="0.5" stroke-width="1.25"/><line x1="534" y1="505.63" x2="855.5" y2="505.63" stroke="#22434b" stroke-opacity="0.34" stroke-width="1.25"/><line x1="534" y1="516.16" x2="855.5" y2="516.16" stroke="#22434b" stroke-opacity="0.34" stroke-width="1.25"/><line x1="534" y1="526.69" x2="855.5" y2="526.69" stroke="#22434b" stroke-opacity="0.34" stroke-width="1.25"/><line x1="534" y1="537.22" x2="855.5" y2="537.22" stroke="#22434b" stroke-opacity="0.34" stroke-width="1.25"/><line x1="534" y1="547.75" x2="855.5" y2="547.75" stroke="#22434b" stroke-opacity="0.34" stroke-width="1.25"/><line x1="534" y1="558.28" x2="855.5" y2="558.28" stroke="#22434b" stroke-opacity="0.34" stroke-width="1.25"/><line x1="534" y1="568.81" x2="855.5" y2="568.81" stroke="#22434b" stroke-opacity="0.34" stroke-width="1.25"/><line x1="534" y1="579.34" x2="855.5" y2="579.34" stroke="#22434b" stroke-opacity="0.34" stroke-width="1.25"/><line x1="534" y1="589.87" x2="855.5" y2="589.87" stroke="#22434b" stroke-opacity="0.34" stroke-width="1.25"/><line x1="534" y1="600.40" x2="855.5" y2="600.40" stroke="#303a40" stroke-opacity="0.5" stroke-width="1.25"/><line x1="534" y1="610.93" x2="855.5" y2="610.93" stroke="#22434b" stroke-opacity="0.34" stroke-width="1.25"/><line x1="534" y1="621.46" x2="855.5" y2="621.46" stroke="#22434b" stroke-opacity="0.34" stroke-width="1.25"/><rect x="606" y="95.89999999999999" width="20.5" height="2.4" rx="1" fill="#1d2a2e"/><rect x="658.4" y="95.89999999999999" width="20.5" height="2.4" rx="1" fill="#1d2a2e"/><rect x="710.5" y="95.89999999999999" width="20.5" height="2.4" rx="1" fill="#1d2a2e"/><rect x="762.2" y="95.89999999999999" width="20.5" height="2.4" rx="1" fill="#1d2a2e"/><rect x="816" y="95.89999999999999" width="20.5" height="2.4" rx="1" fill="#1d2a2e"/><rect x="571.4" y="363.9" width="20" height="2.2" rx="1" fill="#20292d"/><rect x="648" y="363.9" width="20" height="2.2" rx="1" fill="#20292d"/><rect x="721.8" y="363.9" width="20" height="2.2" rx="1" fill="#20292d"/><rect x="799.4" y="363.9" width="20" height="2.2" rx="1" fill="#20292d"/><rect x="571.4" y="464.7" width="20" height="2.2" rx="1" fill="#20292d"/><rect x="648" y="464.7" width="20" height="2.2" rx="1" fill="#20292d"/><rect x="721.8" y="464.7" width="20" height="2.2" rx="1" fill="#20292d"/><rect x="799.4" y="464.7" width="20" height="2.2" rx="1" fill="#20292d"/><rect x="571.4" y="560.3000000000001" width="20" height="2.2" rx="1" fill="#20292d"/><rect x="648" y="560.3000000000001" width="20" height="2.2" rx="1" fill="#20292d"/><rect x="721.8" y="560.3000000000001" width="20" height="2.2" rx="1" fill="#20292d"/><rect x="799.4" y="560.3000000000001" width="20" height="2.2" rx="1" fill="#20292d"/><rect x="614.3" y="168.89999999999998" width="2.4" height="19" fill="#1d2a2e"/><rect x="614.3" y="235.2" width="2.4" height="19" fill="#1d2a2e"/><rect x="667.4" y="168.89999999999998" width="2.4" height="19" fill="#1d2a2e"/><rect x="667.4" y="235.2" width="2.4" height="19" fill="#1d2a2e"/><rect x="719.1999999999999" y="168.89999999999998" width="2.4" height="19" fill="#1d2a2e"/><rect x="719.1999999999999" y="235.2" width="2.4" height="19" fill="#1d2a2e"/><rect x="771.8" y="168.89999999999998" width="2.4" height="19" fill="#1d2a2e"/><rect x="771.8" y="235.2" width="2.4" height="19" fill="#1d2a2e"/><rect x="824.3" y="168.89999999999998" width="2.4" height="19" fill="#1d2a2e"/><rect x="824.3" y="235.2" width="2.4" height="19" fill="#1d2a2e"/><defs><linearGradient id="rk0" x1="0" y1="0" x2="0" y2="1"><stop offset="0" stop-color="#4a4a4e"/><stop offset="0.04" stop-color="#8a4010"/><stop offset="0.25" stop-color="#7a3a0e"/><stop offset="0.26" stop-color="#1a0a02"/><stop offset="1" stop-color="#140800"/></linearGradient><linearGradient id="rk1" x1="0" y1="0" x2="0" y2="1"><stop offset="0" stop-color="#4a4a4e"/><stop offset="0.04" stop-color="#7a3a10"/><stop offset="0.12" stop-color="#5a2a0c"/><stop offset="0.2" stop-color="#160a02"/><stop offset="1" stop-color="#120802"/></linearGradient><linearGradient id="rk2" x1="0" y1="0" x2="0" y2="1"><stop offset="0" stop-color="#4a4a4e"/><stop offset="0.04" stop-color="#6a300a"/><stop offset="0.27" stop-color="#3a1a06"/><stop offset="0.28" stop-color="#9a4812"/><stop offset="0.48" stop-color="#8a3e10"/><stop offset="0.49" stop-color="#1a0c04"/><stop offset="0.74" stop-color="#241006"/><stop offset="0.75" stop-color="#b0581a"/><stop offset="0.96" stop-color="#a04e10"/><stop offset="1" stop-color="#4a4a4e"/></linearGradient><linearGradient id="rk3" x1="0" y1="0" x2="0" y2="1"><stop offset="0" stop-color="#4a4a4e"/><stop offset="0.04" stop-color="#84400e"/><stop offset="0.28" stop-color="#7a3a0e"/><stop offset="0.29" stop-color="#2a1206"/><stop offset="0.6" stop-color="#301808"/><stop offset="0.7" stop-color="#140800"/><stop offset="1" stop-color="#120800"/></linearGradient><linearGradient id="rk4" x1="0" y1="0" x2="0" y2="1"><stop offset="0" stop-color="#4a4a4e"/><stop offset="0.04" stop-color="#7a3a10"/><stop offset="0.12" stop-color="#40200a"/><stop offset="0.16" stop-color="#0c0500"/><stop offset="0.74" stop-color="#100600"/><stop offset="0.75" stop-color="#b0581a"/><stop offset="0.96" stop-color="#a04e10"/><stop offset="1" stop-color="#4a4a4e"/></linearGradient><linearGradient id="rk5" x1="0" y1="0" x2="0" y2="1"><stop offset="0" stop-color="#4a4a4e"/><stop offset="0.04" stop-color="#8a4212"/><stop offset="0.26" stop-color="#8a4212"/><stop offset="0.27" stop-color="#140800"/><stop offset="1" stop-color="#120800"/></linearGradient></defs><path d="M755.00,231.70 L787.00,231.70 L787.00,306.20 L755.00,306.20 Z" fill="#5c6064" stroke="#0b0c0d" stroke-width="2.4"/><path d="M807.00,263.70 L841.00,263.70 L841.00,288.20 L807.00,288.20 Z" fill="#5c6064" stroke="#0b0c0d" stroke-width="2.4"/><path d="M581.40,118.60 L600.00,118.60 L607.00,124.60 L607.00,137.60 L602.00,142.10 L602.00,157.50 L607.00,162.00 L607.00,178.20 L602.00,182.70 L602.00,195.40 L607.00,199.90 L607.00,221.20 L602.00,225.70 L602.00,242.70 L607.00,247.20 L607.00,257.90 L602.00,262.40 L602.00,301.70 L597.00,306.70 L579.40,306.70 L574.40,301.70 L574.40,283.20 L579.80,278.70 L579.80,274.70 L574.40,270.20 L574.40,245.70 L579.80,241.20 L579.80,225.70 L574.40,221.20 L574.40,199.90 L579.80,195.40 L579.80,182.70 L574.40,178.20 L574.40,162.00 L579.80,157.50 L579.80,142.10 L574.40,137.60 L574.40,124.60 Z" fill="#5c6064" stroke="#0b0c0d" stroke-width="2.4" stroke-linejoin="round"/><path d="M633.40,118.60 L652.00,118.60 L659.00,124.60 L659.00,137.60 L654.00,142.10 L654.00,157.50 L659.00,162.00 L659.00,178.20 L654.00,182.70 L654.00,195.40 L659.00,199.90 L659.00,221.20 L654.00,225.70 L654.00,242.70 L659.00,247.20 L659.00,257.90 L654.00,262.40 L654.00,301.70 L649.00,306.70 L631.40,306.70 L626.40,301.70 L626.40,283.20 L631.80,278.70 L631.80,274.70 L626.40,270.20 L626.40,245.70 L631.80,241.20 L631.80,225.70 L626.40,221.20 L626.40,199.90 L631.80,195.40 L631.80,182.70 L626.40,178.20 L626.40,162.00 L631.80,157.50 L631.80,142.10 L626.40,137.60 L626.40,124.60 Z" fill="#5c6064" stroke="#0b0c0d" stroke-width="2.4" stroke-linejoin="round"/><path d="M685.40,118.60 L704.00,118.60 L711.00,124.60 L711.00,137.60 L706.00,142.10 L706.00,157.50 L711.00,162.00 L711.00,178.20 L706.00,182.70 L706.00,195.40 L711.00,199.90 L711.00,221.20 L706.00,225.70 L706.00,242.70 L711.00,247.20 L711.00,257.90 L706.00,262.40 L706.00,301.70 L701.00,306.70 L683.40,306.70 L678.40,301.70 L678.40,283.20 L683.80,278.70 L683.80,274.70 L678.40,270.20 L678.40,245.70 L683.80,241.20 L683.80,225.70 L678.40,221.20 L678.40,199.90 L683.80,195.40 L683.80,182.70 L678.40,178.20 L678.40,162.00 L683.80,157.50 L683.80,142.10 L678.40,137.60 L678.40,124.60 Z" fill="#5c6064" stroke="#0b0c0d" stroke-width="2.4" stroke-linejoin="round"/><path d="M737.40,118.60 L751.40,118.60 L758.40,124.60 L758.40,301.70 L753.40,306.70 L735.40,306.70 L730.40,301.70 L730.40,283.20 L735.80,278.70 L735.80,274.70 L730.40,270.20 L730.40,245.70 L735.80,241.20 L735.80,225.70 L730.40,221.20 L730.40,199.90 L735.80,195.40 L735.80,182.70 L730.40,178.20 L730.40,162.00 L735.80,157.50 L735.80,142.10 L730.40,137.60 L730.40,124.60 Z" fill="#5c6064" stroke="#0b0c0d" stroke-width="2.4" stroke-linejoin="round"/><path d="M792.90,118.60 L808.00,118.60 L815.00,124.60 L815.00,137.60 L810.00,142.10 L810.00,157.50 L815.00,162.00 L815.00,178.20 L810.00,182.70 L810.00,195.40 L815.00,199.90 L815.00,221.20 L810.00,225.70 L810.00,242.70 L815.00,247.20 L815.00,257.90 L810.00,262.40 L810.00,301.70 L805.00,306.70 L790.90,306.70 L785.90,301.70 L785.90,124.60 Z" fill="#5c6064" stroke="#0b0c0d" stroke-width="2.4" stroke-linejoin="round"/><path d="M841.40,118.60 L860.00,118.60 L867.00,124.60 L867.00,137.60 L862.00,142.10 L862.00,157.50 L867.00,162.00 L867.00,178.20 L862.00,182.70 L862.00,195.40 L867.00,199.90 L867.00,221.20 L862.00,225.70 L862.00,242.70 L867.00,247.20 L867.00,257.90 L862.00,262.40 L862.00,301.70 L857.00,306.70 L839.40,306.70 L834.40,301.70 L834.40,283.20 L839.80,278.70 L839.80,274.70 L834.40,270.20 L834.40,245.70 L839.80,241.20 L839.80,225.70 L834.40,221.20 L834.40,199.90 L839.80,195.40 L839.80,182.70 L834.40,178.20 L834.40,162.00 L839.80,157.50 L839.80,142.10 L834.40,137.60 L834.40,124.60 Z" fill="#5c6064" stroke="#0b0c0d" stroke-width="2.4" stroke-linejoin="round"/><rect x="749" y="233.2" width="43" height="71.5" fill="#5c6064"/><rect x="809" y="265.2" width="30" height="21.8" fill="#5c6064"/><rect x="584.40" y="122.7" width="12" height="179" fill="url(#rk0)"/><rect x="582.60" y="124.2" width="2" height="176" fill="#e0a828"/><rect x="595.80" y="124.2" width="2" height="176" fill="#d8a028"/><rect x="584.40" y="122.2" width="12" height="7" fill="#4e5258"/><rect x="584.40" y="295.7" width="12" height="6.5" fill="#4e5258"/><rect x="582.40" y="121.70" width="2.4" height="2.4" fill="#d8b8c8" opacity="0.85"/><rect x="596.80" y="121.70" width="2.4" height="2.4" fill="#d8b8c8" opacity="0.85"/><rect x="582.40" y="301.70" width="2.4" height="2.4" fill="#d8b8c8" opacity="0.85"/><rect x="596.80" y="301.70" width="2.4" height="2.4" fill="#d8b8c8" opacity="0.85"/><rect x="636.40" y="122.7" width="12" height="179" fill="url(#rk1)"/><rect x="634.60" y="124.2" width="2" height="176" fill="#e0a828"/><rect x="647.80" y="124.2" width="2" height="176" fill="#d8a028"/><rect x="636.40" y="122.2" width="12" height="7" fill="#4e5258"/><rect x="636.40" y="295.7" width="12" height="6.5" fill="#4e5258"/><rect x="634.40" y="121.70" width="2.4" height="2.4" fill="#d8b8c8" opacity="0.85"/><rect x="648.80" y="121.70" width="2.4" height="2.4" fill="#d8b8c8" opacity="0.85"/><rect x="634.40" y="301.70" width="2.4" height="2.4" fill="#d8b8c8" opacity="0.85"/><rect x="648.80" y="301.70" width="2.4" height="2.4" fill="#d8b8c8" opacity="0.85"/><rect x="688.40" y="122.7" width="12" height="179" fill="url(#rk2)"/><rect x="686.60" y="124.2" width="2" height="176" fill="#e0a828"/><rect x="699.80" y="124.2" width="2" height="176" fill="#d8a028"/><rect x="688.40" y="122.2" width="12" height="7" fill="#4e5258"/><rect x="688.40" y="295.7" width="12" height="6.5" fill="#4e5258"/><rect x="686.40" y="121.70" width="2.4" height="2.4" fill="#d8b8c8" opacity="0.85"/><rect x="700.80" y="121.70" width="2.4" height="2.4" fill="#d8b8c8" opacity="0.85"/><rect x="686.40" y="301.70" width="2.4" height="2.4" fill="#d8b8c8" opacity="0.85"/><rect x="700.80" y="301.70" width="2.4" height="2.4" fill="#d8b8c8" opacity="0.85"/><rect x="740.40" y="122.7" width="12" height="179" fill="url(#rk3)"/><rect x="738.60" y="124.2" width="2" height="176" fill="#e0a828"/><rect x="751.80" y="124.2" width="2" height="176" fill="#d8a028"/><rect x="740.40" y="122.2" width="12" height="7" fill="#4e5258"/><rect x="740.40" y="295.7" width="12" height="6.5" fill="#4e5258"/><rect x="738.40" y="121.70" width="2.4" height="2.4" fill="#d8b8c8" opacity="0.85"/><rect x="752.80" y="121.70" width="2.4" height="2.4" fill="#d8b8c8" opacity="0.85"/><rect x="738.40" y="301.70" width="2.4" height="2.4" fill="#d8b8c8" opacity="0.85"/><rect x="752.80" y="301.70" width="2.4" height="2.4" fill="#d8b8c8" opacity="0.85"/><rect x="792.40" y="122.7" width="12" height="179" fill="url(#rk4)"/><rect x="790.60" y="124.2" width="2" height="176" fill="#e0a828"/><rect x="803.80" y="124.2" width="2" height="176" fill="#d8a028"/><rect x="792.40" y="122.2" width="12" height="7" fill="#4e5258"/><rect x="792.40" y="295.7" width="12" height="6.5" fill="#4e5258"/><rect x="790.40" y="121.70" width="2.4" height="2.4" fill="#d8b8c8" opacity="0.85"/><rect x="804.80" y="121.70" width="2.4" height="2.4" fill="#d8b8c8" opacity="0.85"/><rect x="790.40" y="301.70" width="2.4" height="2.4" fill="#d8b8c8" opacity="0.85"/><rect x="804.80" y="301.70" width="2.4" height="2.4" fill="#d8b8c8" opacity="0.85"/><rect x="844.40" y="122.7" width="12" height="179" fill="url(#rk5)"/><rect x="842.60" y="124.2" width="2" height="176" fill="#e0a828"/><rect x="855.80" y="124.2" width="2" height="176" fill="#d8a028"/><rect x="844.40" y="122.2" width="12" height="7" fill="#4e5258"/><rect x="844.40" y="295.7" width="12" height="6.5" fill="#4e5258"/><rect x="842.40" y="121.70" width="2.4" height="2.4" fill="#d8b8c8" opacity="0.85"/><rect x="856.80" y="121.70" width="2.4" height="2.4" fill="#d8b8c8" opacity="0.85"/><rect x="842.40" y="301.70" width="2.4" height="2.4" fill="#d8b8c8" opacity="0.85"/><rect x="856.80" y="301.70" width="2.4" height="2.4" fill="#d8b8c8" opacity="0.85"/><rect x="767" y="261.2" width="4" height="4" fill="#1a1a1a" transform="rotate(30 767 261.2)"/><rect x="775" y="267.2" width="5" height="5" fill="#1a1a1a" transform="rotate(30 775 267.2)"/><rect x="771" y="275.2" width="4" height="4" fill="#1a1a1a" transform="rotate(30 771 275.2)"/><rect x="763" y="273.2" width="3" height="3" fill="#1a1a1a" transform="rotate(30 763 273.2)"/><rect x="779" y="253.2" width="4" height="4" fill="#1a1a1a" transform="rotate(30 779 253.2)"/><rect x="769" y="283.2" width="3" height="3" fill="#1a1a1a" transform="rotate(30 769 283.2)"/><rect x="761" y="251.2" width="3" height="3" fill="#1a1a1a" transform="rotate(30 761 251.2)"/><rect x="777" y="249.2" width="5" height="5" fill="#d8d0c0"/><circle cx="761" cy="241.2" r="1.3" fill="#c8b8a0"/><circle cx="773" cy="238.2" r="1.3" fill="#c8b8a0"/><circle cx="783" cy="241.2" r="1.3" fill="#c8b8a0"/><circle cx="761" cy="293.2" r="1.3" fill="#c8b8a0"/><circle cx="775" cy="295.2" r="1.3" fill="#c8b8a0"/><circle cx="784" cy="292.2" r="1.3" fill="#c8b8a0"/><rect x="820" y="269.2" width="22" height="13" rx="3" fill="#141414"/><rect x="833" y="269.2" width="6" height="13" fill="#d8c020"/><rect x="855.6" y="67.7" width="30.399999999999977" height="567.5" fill="#13171a"/><line x1="856.75" y1="68.2" x2="856.75" y2="635.2" stroke="#fff" stroke-opacity="0.07" stroke-width="1.2"/><line x1="867.26" y1="68.2" x2="867.26" y2="635.2" stroke="#fff" stroke-opacity="0.07" stroke-width="1.2"/><line x1="877.77" y1="68.2" x2="877.77" y2="635.2" stroke="#fff" stroke-opacity="0.07" stroke-width="1.2"/><line x1="855.6" y1="73.90" x2="886" y2="73.90" stroke="#fff" stroke-opacity="0.07" stroke-width="1.2"/><line x1="855.6" y1="84.43" x2="886" y2="84.43" stroke="#fff" stroke-opacity="0.07" stroke-width="1.2"/><line x1="855.6" y1="94.96" x2="886" y2="94.96" stroke="#fff" stroke-opacity="0.07" stroke-width="1.2"/><line x1="855.6" y1="105.49" x2="886" y2="105.49" stroke="#fff" stroke-opacity="0.07" stroke-width="1.2"/><line x1="855.6" y1="116.02" x2="886" y2="116.02" stroke="#fff" stroke-opacity="0.07" stroke-width="1.2"/><line x1="855.6" y1="126.55" x2="886" y2="126.55" stroke="#fff" stroke-opacity="0.07" stroke-width="1.2"/><line x1="855.6" y1="137.08" x2="886" y2="137.08" stroke="#fff" stroke-opacity="0.07" stroke-width="1.2"/><line x1="855.6" y1="147.61" x2="886" y2="147.61" stroke="#fff" stroke-opacity="0.07" stroke-width="1.2"/><line x1="855.6" y1="158.14" x2="886" y2="158.14" stroke="#fff" stroke-opacity="0.07" stroke-width="1.2"/><line x1="855.6" y1="168.67" x2="886" y2="168.67" stroke="#fff" stroke-opacity="0.07" stroke-width="1.2"/><line x1="855.6" y1="179.20" x2="886" y2="179.20" stroke="#fff" stroke-opacity="0.07" stroke-width="1.2"/><line x1="855.6" y1="189.73" x2="886" y2="189.73" stroke="#fff" stroke-opacity="0.07" stroke-width="1.2"/><line x1="855.6" y1="200.26" x2="886" y2="200.26" stroke="#fff" stroke-opacity="0.07" stroke-width="1.2"/><line x1="855.6" y1="210.79" x2="886" y2="210.79" stroke="#fff" stroke-opacity="0.07" stroke-width="1.2"/><line x1="855.6" y1="221.32" x2="886" y2="221.32" stroke="#fff" stroke-opacity="0.07" stroke-width="1.2"/><line x1="855.6" y1="231.85" x2="886" y2="231.85" stroke="#fff" stroke-opacity="0.07" stroke-width="1.2"/><line x1="855.6" y1="242.38" x2="886" y2="242.38" stroke="#fff" stroke-opacity="0.07" stroke-width="1.2"/><line x1="855.6" y1="252.91" x2="886" y2="252.91" stroke="#fff" stroke-opacity="0.07" stroke-width="1.2"/><line x1="855.6" y1="263.44" x2="886" y2="263.44" stroke="#fff" stroke-opacity="0.07" stroke-width="1.2"/><line x1="855.6" y1="273.97" x2="886" y2="273.97" stroke="#fff" stroke-opacity="0.07" stroke-width="1.2"/><line x1="855.6" y1="284.50" x2="886" y2="284.50" stroke="#fff" stroke-opacity="0.07" stroke-width="1.2"/><line x1="855.6" y1="295.03" x2="886" y2="295.03" stroke="#fff" stroke-opacity="0.07" stroke-width="1.2"/><line x1="855.6" y1="305.56" x2="886" y2="305.56" stroke="#fff" stroke-opacity="0.07" stroke-width="1.2"/><line x1="855.6" y1="316.09" x2="886" y2="316.09" stroke="#fff" stroke-opacity="0.07" stroke-width="1.2"/><line x1="855.6" y1="326.62" x2="886" y2="326.62" stroke="#fff" stroke-opacity="0.07" stroke-width="1.2"/><line x1="855.6" y1="337.15" x2="886" y2="337.15" stroke="#fff" stroke-opacity="0.07" stroke-width="1.2"/><line x1="855.6" y1="347.68" x2="886" y2="347.68" stroke="#fff" stroke-opacity="0.07" stroke-width="1.2"/><line x1="855.6" y1="358.21" x2="886" y2="358.21" stroke="#fff" stroke-opacity="0.07" stroke-width="1.2"/><line x1="855.6" y1="368.74" x2="886" y2="368.74" stroke="#fff" stroke-opacity="0.07" stroke-width="1.2"/><line x1="855.6" y1="379.27" x2="886" y2="379.27" stroke="#fff" stroke-opacity="0.07" stroke-width="1.2"/><line x1="855.6" y1="389.80" x2="886" y2="389.80" stroke="#fff" stroke-opacity="0.07" stroke-width="1.2"/><line x1="855.6" y1="400.33" x2="886" y2="400.33" stroke="#fff" stroke-opacity="0.07" stroke-width="1.2"/><line x1="855.6" y1="410.86" x2="886" y2="410.86" stroke="#fff" stroke-opacity="0.07" stroke-width="1.2"/><line x1="855.6" y1="421.39" x2="886" y2="421.39" stroke="#fff" stroke-opacity="0.07" stroke-width="1.2"/><line x1="855.6" y1="431.92" x2="886" y2="431.92" stroke="#fff" stroke-opacity="0.07" stroke-width="1.2"/><line x1="855.6" y1="442.45" x2="886" y2="442.45" stroke="#fff" stroke-opacity="0.07" stroke-width="1.2"/><line x1="855.6" y1="452.98" x2="886" y2="452.98" stroke="#fff" stroke-opacity="0.07" stroke-width="1.2"/><line x1="855.6" y1="463.51" x2="886" y2="463.51" stroke="#fff" stroke-opacity="0.07" stroke-width="1.2"/><line x1="855.6" y1="474.04" x2="886" y2="474.04" stroke="#fff" stroke-opacity="0.07" stroke-width="1.2"/><line x1="855.6" y1="484.57" x2="886" y2="484.57" stroke="#fff" stroke-opacity="0.07" stroke-width="1.2"/><line x1="855.6" y1="495.10" x2="886" y2="495.10" stroke="#fff" stroke-opacity="0.07" stroke-width="1.2"/><line x1="855.6" y1="505.63" x2="886" y2="505.63" stroke="#fff" stroke-opacity="0.07" stroke-width="1.2"/><line x1="855.6" y1="516.16" x2="886" y2="516.16" stroke="#fff" stroke-opacity="0.07" stroke-width="1.2"/><line x1="855.6" y1="526.69" x2="886" y2="526.69" stroke="#fff" stroke-opacity="0.07" stroke-width="1.2"/><line x1="855.6" y1="537.22" x2="886" y2="537.22" stroke="#fff" stroke-opacity="0.07" stroke-width="1.2"/><line x1="855.6" y1="547.75" x2="886" y2="547.75" stroke="#fff" stroke-opacity="0.07" stroke-width="1.2"/><line x1="855.6" y1="558.28" x2="886" y2="558.28" stroke="#fff" stroke-opacity="0.07" stroke-width="1.2"/><line x1="855.6" y1="568.81" x2="886" y2="568.81" stroke="#fff" stroke-opacity="0.07" stroke-width="1.2"/><line x1="855.6" y1="579.34" x2="886" y2="579.34" stroke="#fff" stroke-opacity="0.07" stroke-width="1.2"/><line x1="855.6" y1="589.87" x2="886" y2="589.87" stroke="#fff" stroke-opacity="0.07" stroke-width="1.2"/><line x1="855.6" y1="600.40" x2="886" y2="600.40" stroke="#fff" stroke-opacity="0.07" stroke-width="1.2"/><line x1="855.6" y1="610.93" x2="886" y2="610.93" stroke="#fff" stroke-opacity="0.07" stroke-width="1.2"/><line x1="855.6" y1="621.46" x2="886" y2="621.46" stroke="#fff" stroke-opacity="0.07" stroke-width="1.2"/><line x1="855.6" y1="631.99" x2="886" y2="631.99" stroke="#fff" stroke-opacity="0.07" stroke-width="1.2"/><path d="M855.60,91.20 Q851.50,99.20 855.60,107.20 Z" fill="#15181b"/><ellipse cx="854.50" cy="99.2" rx="2.4" ry="2.6" fill="#c8cacc"/><path d="M855.60,154.20 Q851.50,162.20 855.60,170.20 Z" fill="#15181b"/><ellipse cx="854.50" cy="162.2" rx="2.4" ry="2.6" fill="#c8cacc"/><path d="M855.60,217.20 Q851.50,225.20 855.60,233.20 Z" fill="#15181b"/><ellipse cx="854.50" cy="225.2" rx="2.4" ry="2.6" fill="#c8cacc"/><path d="M855.60,280.20 Q851.50,288.20 855.60,296.20 Z" fill="#15181b"/><ellipse cx="854.50" cy="288.2" rx="2.4" ry="2.6" fill="#c8cacc"/><path d="M534.00,343.20 Q537.50,352.20 534.00,361.20 Z" fill="#15181b"/><ellipse cx="534.00" cy="352.2" rx="2.3" ry="3" fill="#b8bcbf"/><ellipse cx="534.00" cy="353.7" rx="2" ry="1.2" fill="#50565a"/><path d="M855.60,343.20 Q852.10,352.20 855.60,361.20 Z" fill="#15181b"/><ellipse cx="855.60" cy="352.2" rx="2.3" ry="3" fill="#b8bcbf"/><ellipse cx="855.60" cy="353.7" rx="2" ry="1.2" fill="#50565a"/><path d="M534.00,406.20 Q537.50,415.20 534.00,424.20 Z" fill="#15181b"/><ellipse cx="534.00" cy="415.2" rx="2.3" ry="3" fill="#b8bcbf"/><ellipse cx="534.00" cy="416.7" rx="2" ry="1.2" fill="#50565a"/><path d="M855.60,406.20 Q852.10,415.20 855.60,424.20 Z" fill="#15181b"/><ellipse cx="855.60" cy="415.2" rx="2.3" ry="3" fill="#b8bcbf"/><ellipse cx="855.60" cy="416.7" rx="2" ry="1.2" fill="#50565a"/><path d="M534.00,469.20 Q537.50,478.20 534.00,487.20 Z" fill="#15181b"/><ellipse cx="534.00" cy="478.2" rx="2.3" ry="3" fill="#b8bcbf"/><ellipse cx="534.00" cy="479.7" rx="2" ry="1.2" fill="#50565a"/><path d="M855.60,469.20 Q852.10,478.20 855.60,487.20 Z" fill="#15181b"/><ellipse cx="855.60" cy="478.2" rx="2.3" ry="3" fill="#b8bcbf"/><ellipse cx="855.60" cy="479.7" rx="2" ry="1.2" fill="#50565a"/><path d="M534.00,533.20 Q537.50,542.20 534.00,551.20 Z" fill="#15181b"/><ellipse cx="534.00" cy="542.2" rx="2.3" ry="3" fill="#b8bcbf"/><ellipse cx="534.00" cy="543.7" rx="2" ry="1.2" fill="#50565a"/><path d="M855.60,533.20 Q852.10,542.20 855.60,551.20 Z" fill="#15181b"/><ellipse cx="855.60" cy="542.2" rx="2.3" ry="3" fill="#b8bcbf"/><ellipse cx="855.60" cy="543.7" rx="2" ry="1.2" fill="#50565a"/><path d="M534.00,596.20 Q537.50,605.20 534.00,614.20 Z" fill="#15181b"/><ellipse cx="534.00" cy="605.2" rx="2.3" ry="3" fill="#b8bcbf"/><ellipse cx="534.00" cy="606.7" rx="2" ry="1.2" fill="#50565a"/><path d="M855.60,596.20 Q852.10,605.20 855.60,614.20 Z" fill="#15181b"/><ellipse cx="855.60" cy="605.2" rx="2.3" ry="3" fill="#b8bcbf"/><ellipse cx="855.60" cy="606.7" rx="2" ry="1.2" fill="#50565a"/><line x1="0" y1="389.9" x2="534" y2="389.9" stroke="#5a3336" stroke-width="1.4"/><line x1="855.6" y1="389.9" x2="1397.3" y2="389.9" stroke="#5a3336" stroke-width="1.4"/><line x1="534" y1="389.9" x2="855.6" y2="389.9" stroke="#8a4a55" stroke-opacity="0.45" stroke-width="1.4"/><line x1="804.2" y1="38.2" x2="804.2" y2="70.2" stroke="#2a5e2c" stroke-width="1.3"/><line x1="804.2" y1="635.2" x2="804.2" y2="683.2" stroke="#2a5e2c" stroke-width="1.3"/><path d="M509.30,38.20 L509.30,668.40 L888.40,668.40 L888.40,38.20" fill="none" stroke="#2f7d32" stroke-width="1.9"/><line x1="855.8" y1="38.2" x2="855.8" y2="69.2" stroke="#747474" stroke-width="1.1"/></svg></div><div style="position:absolute;left:55.6px;top:58.8px;width:24.1px;height:24.4px;background:#25272a;border-radius:5px"></div><svg style="position:absolute;left:55.6px;top:58.8px;overflow:visible;" width="24" height="24" viewBox="0 0 24 24">
<path d="M5 7.5 H19 M5 12 H19 M5 16.5 H19" stroke="#c8c8c8" stroke-width="1.6"/>
<circle cx="14" cy="7.5" r="2.2" fill="#c8c8c8"/><circle cx="9" cy="12" r="2.2" fill="#c8c8c8"/><circle cx="14" cy="16.5" r="2.2" fill="#c8c8c8"/>
</svg><svg style="position:absolute;left:76px;top:79.3px;overflow:visible;" width="4" height="4" viewBox="0 0 4 4"><path d="M4 0 V4 H0z" fill="#d8d8d8"/></svg><div style="position:absolute;left:93.9px;top:58.8px;width:121.3px;height:24.4px;background:#25272a;border-radius:5px"></div><svg style="position:absolute;left:99px;top:61px;overflow:visible;" width="16" height="22" viewBox="0 0 16 22">
<path d="M7.5 2 A5.5 5.5 0 0 1 13 7.5 C13 10 11 11.5 10.5 13.5 L10.5 15 H4.5 L4.5 13.5 C4 11.5 2 10 2 7.5 A5.5 5.5 0 0 1 7.5 2 Z" fill="none" stroke="#a8a8a8" stroke-width="1.5"/>
<path d="M4.5 15 H10.5 V18 L7.5 20 L4.5 18 Z" fill="#a8a8a8"/>
</svg><svg style="position:absolute;left:0;top:0;overflow:visible;will-change:transform" width="1" height="1"><text x="123.8" y="75.8" font-size="12" fill="#c4c5c7" stroke="#c4c5c7" stroke-width="0.25" font-weight="normal" letter-spacing="-0.2" style="white-space:pre">RTX - Real-Time</text></svg><svg style="position:absolute;left:211.5px;top:79.3px;overflow:visible;" width="4" height="4" viewBox="0 0 4 4"><path d="M4 0 V4 H0z" fill="#d8d8d8"/></svg><div style="position:absolute;left:229.1px;top:59.2px;width:24.4px;height:24.4px;background:#2b2c2f;border-radius:4px"></div><svg style="position:absolute;left:229.1px;top:59.2px;overflow:visible;" width="25" height="25" viewBox="0 0 25 25">
<path d="M1.8 14.5 C5 8 11 5.5 15 5.8 C18 6 20 7.5 22 9.5 C19 8 16 7.2 13 7.5 C8 8 4.5 11 1.8 14.5 Z" fill="#a9a9ab"/>
<path d="M3 16 C8 19.5 15 19.5 21 13 C17 16.5 9 17.5 3 16 Z" fill="#a9a9ab"/>
<circle cx="12.9" cy="10.8" r="3.5" fill="#a9a9ab"/>
</svg><svg style="position:absolute;left:249.5px;top:79.6px;overflow:visible;" width="4" height="4" viewBox="0 0 4 4"><path d="M4 0 V4 H0z" fill="#d8d8d8"/></svg><div style="position:absolute;left:266.9px;top:58.8px;width:170.1px;height:24.4px;background:#25272a;border-radius:5px"></div><svg style="position:absolute;left:268px;top:60px;overflow:visible;" width="30" height="22" viewBox="0 0 30 22">
<circle cx="4.6" cy="7.1" r="2.8" fill="#a2a2a4"/><circle cx="12.8" cy="5.8" r="3.8" fill="#a2a2a4"/>
<rect x="2.9" y="11" width="13.2" height="8.8" rx="1.5" fill="#a2a2a4"/>
<path d="M16.8 15.3 L21 11 V19.4 Z" fill="#a2a2a4"/>
</svg><svg style="position:absolute;left:0;top:0;overflow:visible;will-change:transform" width="1" height="1"><text x="297.3" y="75.8" font-size="12" fill="#c4c5c7" stroke="#c4c5c7" stroke-width="0.25" font-weight="normal" style="white-space:pre">Calibration_Top_Camera</text></svg><svg style="position:absolute;left:433.3px;top:79.3px;overflow:visible;" width="4" height="4" viewBox="0 0 4 4"><path d="M4 0 V4 H0z" fill="#d8d8d8"/></svg><svg style="position:absolute;left:439px;top:58px;overflow:visible;" width="18" height="27" viewBox="0 0 18 27"><path d="M1 1.5 H3 L9.8 13.5 L3 25.5 H1 Z" fill="#25282b"/><path d="M5.5 2 L12.5 13.5 L5.5 25" fill="none" stroke="#2c2e31" stroke-width="1.8"/></svg><div style="position:absolute;left:469.3px;top:58.8px;width:24.7px;height:24.4px;background:#25272a;border-radius:5px"></div><svg style="position:absolute;left:469.3px;top:58.8px;overflow:visible;" width="25" height="25" viewBox="0 0 25 25">
<circle cx="12.5" cy="12.2" r="3.3" fill="#b0b0b0"/>
<path d="M8 7.5 A6.5 6.5 0 0 0 8 17 M17 7.5 A6.5 6.5 0 0 1 17 17" fill="none" stroke="#b0b0b0" stroke-width="1.6"/>
<path d="M5 5 A10 10 0 0 0 5 19.5 M20 5 A10 10 0 0 1 20 19.5" fill="none" stroke="#b0b0b0" stroke-width="1.6"/>
</svg><svg style="position:absolute;left:490.3px;top:79.3px;overflow:visible;" width="4" height="4" viewBox="0 0 4 4"><path d="M4 0 V4 H0z" fill="#d8d8d8"/></svg><div style="position:absolute;left:1330.2px;top:59px;width:114.6px;height:24.5px;background:#25272a;border-radius:5px"></div><svg style="position:absolute;left:1337px;top:61px;overflow:visible;" width="20" height="20" viewBox="0 0 20 20">
<path d="M10 0 L18.83 15.1 H1.17 Z M10 20.2 L18.83 5.1 H1.17 Z" fill="#d3d69c" stroke="#1a1a10" stroke-width="0.6"/>
<circle cx="10" cy="10" r="6.3" fill="#cfcd6e" stroke="#1c1c0c" stroke-width="1.3"/>
</svg><svg style="position:absolute;left:0;top:0;overflow:visible;will-change:transform" width="1" height="1"><text x="1369.3" y="76.4" font-size="12.2" fill="#c8c9cb" stroke="#c8c9cb" stroke-width="0.25" font-weight="normal" style="white-space:pre">Stage Lights</text></svg><svg style="position:absolute;left:1441px;top:79.5px;overflow:visible;" width="4" height="4" viewBox="0 0 4 4"><path d="M4 0 V4 H0z" fill="#d8d8d8"/></svg><div style="position:absolute;left:1065.3px;top:92.3px;width:378.5px;height:84.3px;background:rgba(32,34,37,0.9);border-radius:6px"></div><svg style="position:absolute;left:0;top:0;overflow:visible;will-change:transform" width="1" height="1"><text x="1434.3" y="110.7" text-anchor="end" font-size="11.8" fill="#c6c7c9" stroke="#c6c7c9" stroke-width="0.25" font-weight="normal" style="white-space:pre">FPS: 118.67, Frame time: 8.43 ms</text></svg><svg style="position:absolute;left:0;top:0;overflow:visible;will-change:transform" width="1" height="1"><text x="1434.3" y="129.6" text-anchor="end" font-size="11.8" fill="#c6c7c9" stroke="#c6c7c9" stroke-width="0.25" font-weight="normal" style="white-space:pre">NVIDIA RTX 6000 Ada Generation: 2.2 GiB used, 40.3 GiB available</text></svg><svg style="position:absolute;left:0;top:0;overflow:visible;will-change:transform" width="1" height="1"><text x="1434.3" y="147.9" text-anchor="end" font-size="11.8" fill="#c6c7c9" stroke="#c6c7c9" stroke-width="0.25" font-weight="normal" style="white-space:pre">Process Memory: 8.4 GiB used, 99.7 GiB available</text></svg><svg style="position:absolute;left:0;top:0;overflow:visible;will-change:transform" width="1" height="1"><text x="1434.3" y="166.8" text-anchor="end" font-size="11.8" fill="#c6c7c9" stroke="#c6c7c9" stroke-width="0.25" font-weight="normal" style="white-space:pre">1280x720</text></svg><div style="position:absolute;left:228px;top:86px;width:227px;height:12.3px;background:#1d1f21;"></div><div style="position:absolute;left:240.7px;top:92.5px;width:201px;height:1px;background:#3a3c3f;"></div><div style="position:absolute;left:228px;top:98.3px;width:227px;height:184.7px;background:#25272a;"></div><div style="position:absolute;left:228.5px;top:126.8px;width:225px;height:25.2px;background:#1e2023;"></div><svg style="position:absolute;left:237.0px;top:106.9px;overflow:visible;" width="11" height="10" viewBox="0 0 11 10"><path d="M0.8 3.8 L3.8 6.8 L9.5 0.8" fill="none" stroke="#3cb6ea" stroke-width="2.1"/></svg><svg style="position:absolute;left:0;top:0;overflow:visible;will-change:transform" width="1" height="1"><text x="251.5" y="116.5" font-size="11.9" fill="#c6c7c9" stroke="#c6c7c9" stroke-width="0.25" font-weight="normal" letter-spacing="0.4" style="white-space:pre">Heads Up Display</text></svg><svg style="position:absolute;left:443px;top:107.5px;overflow:visible;" width="5" height="8" viewBox="0 0 5 8"><path d="M0.5 0 L4.5 4 L0.5 8 Z" fill="#c0c0c0"/></svg><svg style="position:absolute;left:234.5px;top:129.8px;overflow:visible;" width="15" height="14" viewBox="0 0 15 14"><rect x="0" y="0" width="15" height="14" fill="#161a20"/><path d="M1.5 13 V1.5 H4.5 L7.5 8 L10.5 1.5 H13.5 V13 H11 V6 L8.5 11.5 H6.5 L4 6 V13 Z" fill="#2a8ee0"/></svg><svg style="position:absolute;left:0;top:0;overflow:visible;will-change:transform" width="1" height="1"><text x="251.5" y="141.8" font-size="11.9" fill="#c6c7c9" stroke="#c6c7c9" stroke-width="0.25" font-weight="normal" letter-spacing="0.4" style="white-space:pre">Show By Type</text></svg><svg style="position:absolute;left:443px;top:132.8px;overflow:visible;" width="5" height="8" viewBox="0 0 5 8"><path d="M0.5 0 L4.5 4 L0.5 8 Z" fill="#c0c0c0"/></svg><svg style="position:absolute;left:234.5px;top:155px;overflow:visible;" width="15" height="14" viewBox="0 0 15 14"><rect x="0" y="0" width="15" height="14" fill="#161a20"/><path d="M1.5 13 V1.5 H4.5 L7.5 8 L10.5 1.5 H13.5 V13 H11 V6 L8.5 11.5 H6.5 L4 6 V13 Z" fill="#2a8ee0"/></svg><svg style="position:absolute;left:0;top:0;overflow:visible;will-change:transform" width="1" height="1"><text x="251.5" y="167.0" font-size="11.9" fill="#c6c7c9" stroke="#c6c7c9" stroke-width="0.25" font-weight="normal" letter-spacing="0.4" style="white-space:pre">Show By Purpose</text></svg><svg style="position:absolute;left:443px;top:158px;overflow:visible;" width="5" height="8" viewBox="0 0 5 8"><path d="M0.5 0 L4.5 4 L0.5 8 Z" fill="#c0c0c0"/></svg><svg style="position:absolute;left:237.0px;top:187.9px;overflow:visible;" width="11" height="10" viewBox="0 0 11 10"><path d="M0.8 3.8 L3.8 6.8 L9.5 0.8" fill="none" stroke="#3cb6ea" stroke-width="2.1"/></svg><svg style="position:absolute;left:0;top:0;overflow:visible;will-change:transform" width="1" height="1"><text x="251.5" y="197.5" font-size="11.9" fill="#c6c7c9" stroke="#c6c7c9" stroke-width="0.25" font-weight="normal" letter-spacing="0.4" style="white-space:pre">Selection Outline</text></svg><svg style="position:absolute;left:237.0px;top:212.4px;overflow:visible;" width="11" height="10" viewBox="0 0 11 10"><path d="M0.8 3.8 L3.8 6.8 L9.5 0.8" fill="none" stroke="#3cb6ea" stroke-width="2.1"/></svg><svg style="position:absolute;left:0;top:0;overflow:visible;will-change:transform" width="1" height="1"><text x="251.5" y="222.0" font-size="11.9" fill="#c6c7c9" stroke="#c6c7c9" stroke-width="0.25" font-weight="normal" letter-spacing="0.4" style="white-space:pre">Axis</text></svg><svg style="position:absolute;left:237.0px;top:237.4px;overflow:visible;" width="11" height="10" viewBox="0 0 11 10"><path d="M0.8 3.8 L3.8 6.8 L9.5 0.8" fill="none" stroke="#3cb6ea" stroke-width="2.1"/></svg><svg style="position:absolute;left:0;top:0;overflow:visible;will-change:transform" width="1" height="1"><text x="251.5" y="247.0" font-size="11.9" fill="#c6c7c9" stroke="#c6c7c9" stroke-width="0.25" font-weight="normal" letter-spacing="0.4" style="white-space:pre">Grid</text></svg><svg style="position:absolute;left:0;top:0;overflow:visible;will-change:transform" width="1" height="1"><text x="251.5" y="272.0" font-size="11.9" fill="#c6c7c9" stroke="#c6c7c9" stroke-width="0.25" font-weight="normal" letter-spacing="0.4" style="white-space:pre">Bounding Box</text></svg><div style="position:absolute;left:233px;top:177px;width:216px;height:1.2px;background:#4a4c50;"></div><svg style="position:absolute;left:0;top:0;overflow:visible;will-change:transform" width="1" height="1"><text x="359" y="247" font-size="11.9" fill="#7a7b7d" stroke="#7a7b7d" stroke-width="0" font-weight="normal" style="white-space:pre">G</text></svg><div style="position:absolute;left:454.5px;top:111px;width:186px;height:12.8px;background:#1d1f21;"></div><div style="position:absolute;left:467.7px;top:117px;width:160px;height:1px;background:#3a3c3f;"></div><div style="position:absolute;left:454.5px;top:123.8px;width:186px;height:258.5px;background:#25272a;"></div><div style="position:absolute;left:459px;top:356.8px;width:178px;height:19.4px;background:#1c1e21;"></div><svg style="position:absolute;left:0;top:0;overflow:visible;will-change:transform" width="1" height="1"><text x="478" y="142.0" font-size="11.9" fill="#c6c7c9" stroke="#c6c7c9" stroke-width="0.25" font-weight="normal" letter-spacing="0.4" style="white-space:pre">Cameras</text></svg><svg style="position:absolute;left:0;top:0;overflow:visible;will-change:transform" width="1" height="1"><text x="544.5" y="142.0" font-size="11.9" fill="#737476" stroke="#737476" stroke-width="0" font-weight="normal" letter-spacing="0.3" style="white-space:pre">Shift + C</text></svg><svg style="position:absolute;left:0;top:0;overflow:visible;will-change:transform" width="1" height="1"><text x="478" y="167.0" font-size="11.9" fill="#c6c7c9" stroke="#c6c7c9" stroke-width="0.25" font-weight="normal" letter-spacing="0.4" style="white-space:pre">Lights</text></svg><svg style="position:absolute;left:0;top:0;overflow:visible;will-change:transform" width="1" height="1"><text x="544.5" y="167.0" font-size="11.9" fill="#737476" stroke="#737476" stroke-width="0" font-weight="normal" letter-spacing="0.3" style="white-space:pre">Shift + L</text></svg><svg style="position:absolute;left:0;top:0;overflow:visible;will-change:transform" width="1" height="1"><text x="478" y="192.0" font-size="11.9" fill="#c6c7c9" stroke="#c6c7c9" stroke-width="0.25" font-weight="normal" letter-spacing="0.4" style="white-space:pre">Skeletons</text></svg><svg style="position:absolute;left:463.0px;top:207.4px;overflow:visible;" width="11" height="10" viewBox="0 0 11 10"><path d="M0.8 3.8 L3.8 6.8 L9.5 0.8" fill="none" stroke="#3cb6ea" stroke-width="2.1"/></svg><svg style="position:absolute;left:0;top:0;overflow:visible;will-change:transform" width="1" height="1"><text x="478" y="217.0" font-size="11.9" fill="#c6c7c9" stroke="#c6c7c9" stroke-width="0.25" font-weight="normal" letter-spacing="0.4" style="white-space:pre">Audio</text></svg><svg style="position:absolute;left:463.0px;top:232.4px;overflow:visible;" width="11" height="10" viewBox="0 0 11 10"><path d="M0.8 3.8 L3.8 6.8 L9.5 0.8" fill="none" stroke="#3cb6ea" stroke-width="2.1"/></svg><svg style="position:absolute;left:0;top:0;overflow:visible;will-change:transform" width="1" height="1"><text x="478" y="242.0" font-size="11.9" fill="#c6c7c9" stroke="#c6c7c9" stroke-width="0.25" font-weight="normal" letter-spacing="0.4" style="white-space:pre">Units</text></svg><svg style="position:absolute;left:463.0px;top:257.4px;overflow:visible;" width="11" height="10" viewBox="0 0 11 10"><path d="M0.8 3.8 L3.8 6.8 L9.5 0.8" fill="none" stroke="#3cb6ea" stroke-width="2.1"/></svg><svg style="position:absolute;left:0;top:0;overflow:visible;will-change:transform" width="1" height="1"><text x="478" y="267.0" font-size="11.9" fill="#c6c7c9" stroke="#c6c7c9" stroke-width="0.25" font-weight="normal" letter-spacing="0.4" style="white-space:pre">Sensors</text></svg><svg style="position:absolute;left:463.0px;top:288.09999999999997px;overflow:visible;" width="11" height="10" viewBox="0 0 11 10"><path d="M0.8 3.8 L3.8 6.8 L9.5 0.8" fill="none" stroke="#3cb6ea" stroke-width="2.1"/></svg><svg style="position:absolute;left:0;top:0;overflow:visible;will-change:transform" width="1" height="1"><text x="478" y="297.7" font-size="11.9" fill="#c6c7c9" stroke="#c6c7c9" stroke-width="0.25" font-weight="normal" letter-spacing="0.4" style="white-space:pre">Meshes</text></svg><svg style="position:absolute;left:0;top:0;overflow:visible;will-change:transform" width="1" height="1"><text x="478" y="322.5" font-size="11.9" fill="#c6c7c9" stroke="#c6c7c9" stroke-width="0.25" font-weight="normal" letter-spacing="0.4" style="white-space:pre">Physics</text></svg><svg style="position:absolute;left:628px;top:313.5px;overflow:visible;" width="5" height="8" viewBox="0 0 5 8"><path d="M0.5 0 L4.5 4 L0.5 8 Z" fill="#c0c0c0"/></svg><svg style="position:absolute;left:463.0px;top:337.9px;overflow:visible;" width="11" height="10" viewBox="0 0 11 10"><path d="M0.8 3.8 L3.8 6.8 L9.5 0.8" fill="none" stroke="#3cb6ea" stroke-width="2.1"/></svg><svg style="position:absolute;left:0;top:0;overflow:visible;will-change:transform" width="1" height="1"><text x="478" y="347.5" font-size="11.9" fill="#c6c7c9" stroke="#c6c7c9" stroke-width="0.25" font-weight="normal" letter-spacing="0.4" style="white-space:pre">Retarget Axes</text></svg><svg style="position:absolute;left:463.0px;top:362.7px;overflow:visible;" width="11" height="10" viewBox="0 0 11 10"><path d="M0.8 3.8 L3.8 6.8 L9.5 0.8" fill="none" stroke="#3cb6ea" stroke-width="2.1"/></svg><svg style="position:absolute;left:0;top:0;overflow:visible;will-change:transform" width="1" height="1"><text x="478" y="372.3" font-size="11.9" fill="#c6c7c9" stroke="#c6c7c9" stroke-width="0.25" font-weight="normal" letter-spacing="0.4" style="white-space:pre">NavMesh</text></svg><div style="position:absolute;left:459.7px;top:276.6px;width:175.3px;height:1.2px;background:#4a4c50;"></div><svg style="position:absolute;left:223.1px;top:53.3px;overflow:visible" width="42.00" height="36.30"><rect x="2.90" y="2.90" width="36.20" height="30.50" rx="5.60" fill="none" stroke="#8bcf4e" stroke-width="5.8"/></svg><svg style="position:absolute;left:223px;top:121.3px;overflow:visible" width="235.90" height="36.40"><rect x="2.90" y="2.90" width="230.10" height="30.60" rx="5.60" fill="none" stroke="#8bcf4e" stroke-width="5.8"/></svg><svg style="position:absolute;left:453.2px;top:351.3px;overflow:visible" width="189.30" height="30.50"><rect x="2.90" y="2.90" width="183.50" height="24.70" rx="5.60" fill="none" stroke="#8bcf4e" stroke-width="5.8"/></svg>
</body></html>
